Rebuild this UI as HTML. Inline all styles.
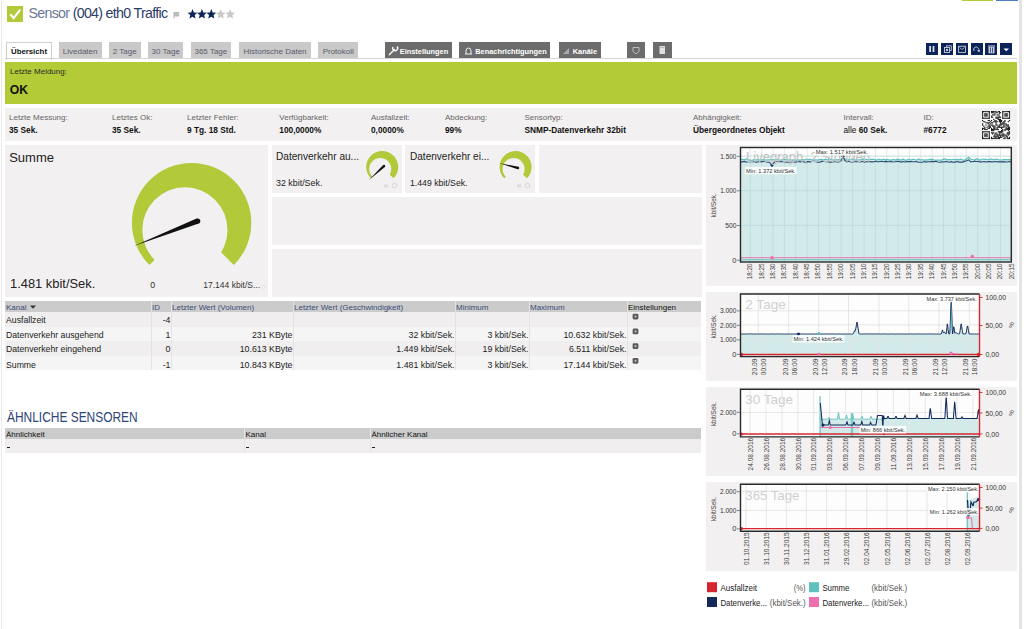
<!DOCTYPE html>
<html><head><meta charset="utf-8">
<style>
*{box-sizing:border-box;margin:0;padding:0}
html,body{width:1024px;height:629px;overflow:hidden;background:#fff;font-family:"Liberation Sans",sans-serif;color:#222}
.a{position:absolute}
.pan{position:absolute;background:#f2f0f0}
.t{position:absolute;white-space:nowrap}
.tab{position:absolute;top:42px;height:16px;background:#c9c9c9}
.btn{position:absolute;top:42px;height:16px;background:#6c6c6c}
.nb{position:absolute;top:43px;width:12px;height:12px;background:#0c2459}
svg{position:absolute;left:0;top:0}
</style></head><body>
<div class="a" style="left:0.5px;top:0;width:1.5px;height:629px;background:#e9e9e9"></div>
<div class="a" style="left:1019px;top:0;width:3px;height:629px;background:#e4e4e4"></div>
<div class="a" style="left:962px;top:0;width:31px;height:1px;background:#b4cc34"></div>
<div class="a" style="left:996px;top:0;width:22px;height:1px;background:#4a7fc1"></div>
<div class="a" style="left:7px;top:6px;width:16px;height:16px;background:#b2c93a"></div>
<svg style="left:7px;top:6px" width="16" height="16"><path d="M3.3 8.3 L6.6 12.2 L13.2 3.6" stroke="#fff" stroke-width="2.1" fill="none"/></svg>
<div class="t" style="left:28.50px;top:6.38px;font-size:14.2px;line-height:14.2px;color:#2c3d66;font-weight:400;letter-spacing:-0.68px;"><span style="color:#6a7896">Sensor</span> (004) eth0 Traffic</div>
<svg style="left:173px;top:10.5px" width="8" height="8"><path d="M1 1 V7.5 M1 1.5 H6 L5.2 3.2 L6 5 H1" stroke="#b5b5b5" stroke-width="1" fill="#bdbdbd"/></svg>
<svg style="left:0;top:0" width="300" height="30"><polygon points="192.50,9.10 193.88,12.41 197.45,12.69 194.73,15.02 195.56,18.51 192.50,16.64 189.44,18.51 190.27,15.02 187.55,12.69 191.12,12.41" fill="#0f2457"/><polygon points="201.90,9.10 203.28,12.41 206.85,12.69 204.13,15.02 204.96,18.51 201.90,16.64 198.84,18.51 199.67,15.02 196.95,12.69 200.52,12.41" fill="#0f2457"/><polygon points="211.30,9.10 212.68,12.41 216.25,12.69 213.53,15.02 214.36,18.51 211.30,16.64 208.24,18.51 209.07,15.02 206.35,12.69 209.92,12.41" fill="#0f2457"/><polygon points="220.70,9.10 222.08,12.41 225.65,12.69 222.93,15.02 223.76,18.51 220.70,16.64 217.64,18.51 218.47,15.02 215.75,12.69 219.32,12.41" fill="#c8c8c8"/><polygon points="230.10,9.10 231.48,12.41 235.05,12.69 232.33,15.02 233.16,18.51 230.10,16.64 227.04,18.51 227.87,15.02 225.15,12.69 228.72,12.41" fill="#c8c8c8"/></svg>
<div class="a" style="left:6px;top:42px;width:46px;height:18px;background:#fff;border:1px solid #cfcfcf;border-bottom:none"></div>
<div class="t" style="left:-71.00px;width:200px;text-align:center;top:48.00px;font-size:7.8px;line-height:7.8px;color:#111;font-weight:700;letter-spacing:0px;">Übersicht</div>
<div class="tab" style="left:58.6px;width:43.1px"></div>
<div class="t" style="left:-19.85px;width:200px;text-align:center;top:47.83px;font-size:8px;line-height:8px;color:#5a5a6a;font-weight:400;letter-spacing:0px;">Livedaten</div>
<div class="tab" style="left:109px;width:31.5px"></div>
<div class="t" style="left:24.75px;width:200px;text-align:center;top:47.83px;font-size:8px;line-height:8px;color:#5a5a6a;font-weight:400;letter-spacing:0px;">2 Tage</div>
<div class="tab" style="left:148px;width:35.4px"></div>
<div class="t" style="left:65.70px;width:200px;text-align:center;top:47.83px;font-size:8px;line-height:8px;color:#5a5a6a;font-weight:400;letter-spacing:0px;">30 Tage</div>
<div class="tab" style="left:191px;width:39.7px"></div>
<div class="t" style="left:110.85px;width:200px;text-align:center;top:47.83px;font-size:8px;line-height:8px;color:#5a5a6a;font-weight:400;letter-spacing:0px;">365 Tage</div>
<div class="tab" style="left:239px;width:72.0px"></div>
<div class="t" style="left:175.00px;width:200px;text-align:center;top:47.83px;font-size:8px;line-height:8px;color:#5a5a6a;font-weight:400;letter-spacing:0px;">Historische Daten</div>
<div class="tab" style="left:318px;width:40.4px"></div>
<div class="t" style="left:238.20px;width:200px;text-align:center;top:47.83px;font-size:8px;line-height:8px;color:#5a5a6a;font-weight:400;letter-spacing:0px;">Protokoll</div>
<div class="btn" style="left:385px;width:66.5px"></div>
<div class="t" style="left:399.75px;top:48.04px;font-size:7.4px;line-height:7.4px;color:#fff;font-weight:700;letter-spacing:0px;">Einstellungen</div>
<div class="btn" style="left:459px;width:91.0px"></div>
<div class="t" style="left:475.25px;top:48.04px;font-size:7.4px;line-height:7.4px;color:#fff;font-weight:700;letter-spacing:0px;">Benachrichtigungen</div>
<div class="btn" style="left:558.5px;width:42.2px"></div>
<div class="t" style="left:572.75px;top:48.04px;font-size:7.4px;line-height:7.4px;color:#fff;font-weight:700;letter-spacing:0px;">Kanäle</div>
<div class="btn" style="left:627px;width:18px"></div>
<div class="btn" style="left:653px;width:18.5px"></div>
<svg width="700" height="60"><path d="M389 55 L395 49 M393 47 a2.5 2.5 0 1 0 4 -0.5" stroke="#fff" stroke-width="1.3" fill="none"/><path d="M465 54 h7 M466 54 v-3 a2.5 3 0 0 1 5 0 v3" stroke="#fff" stroke-width="0.9" fill="none"/><path d="M563 54 L569 48 V54 Z" fill="#aaa"/><path d="M633 47.5 h6 v4 l-3 2.5 l-3 -2.5 z" fill="none" stroke="#bdbdbd" stroke-width="1"/><rect x="659.5" y="46" width="5.5" height="8" fill="#e0e0e0"/><rect x="660" y="47" width="4.5" height="0.6" fill="#999"/></svg>
<div class="nb" style="left:926px"></div>
<div class="nb" style="left:941px"></div>
<div class="nb" style="left:955.8px"></div>
<div class="nb" style="left:970.5px"></div>
<div class="nb" style="left:985.4px"></div>
<div class="nb" style="left:1000.3px"></div>
<svg width="1024" height="60"><rect x="929.2" y="46" width="1.8" height="6" fill="#d8dce6"/><rect x="932.6" y="46" width="1.8" height="6" fill="#d8dce6"/><rect x="944.5" y="47.5" width="5" height="5" fill="none" stroke="#c9ced9" stroke-width="0.9"/><path d="M946.5 47.5 V45.8 H951.3 V50.5 H949.5" fill="none" stroke="#c9ced9" stroke-width="0.9"/><circle cx="947" cy="50" r="1.2" fill="#c9ced9"/><rect x="958.6" y="46.2" width="6.8" height="6.2" fill="none" stroke="#c9ced9" stroke-width="0.9"/><path d="M959.5 47.5 L962 49.5 L964.5 47.5" fill="none" stroke="#c9ced9" stroke-width="0.8"/><path d="M974.3 51 a2.4 2.4 0 1 1 4.2 -1.6" stroke="#c9ced9" stroke-width="1" fill="none"/><path d="M977 50.5 L979.5 52.5 L980 49.5 z" fill="#c9ced9"/><rect x="988.5" y="46.8" width="6" height="6.5" fill="#c9ced9"/><rect x="988" y="45.5" width="7" height="1" fill="#c9ced9"/><rect x="990.3" y="47.5" width="0.7" height="5" fill="#0c2459"/><rect x="992" y="47.5" width="0.7" height="5" fill="#0c2459"/><path d="M1003.5 48.5 h5.5 l-2.75 2.8 z" fill="#fff"/></svg>
<div class="a" style="left:5px;top:58px;width:1012px;height:1px;background:#d6d6d6"></div>
<div class="a" style="left:5px;top:62px;width:1012px;height:42.4px;background:#b3cb37"></div>
<div class="t" style="left:10.00px;top:68.43px;font-size:8px;line-height:8px;color:#2a2a2a;font-weight:400;letter-spacing:0px;">Letzte Meldung:</div>
<div class="t" style="left:9.70px;top:83.57px;font-size:12.2px;line-height:12.2px;color:#111;font-weight:700;letter-spacing:0px;">OK</div>
<div class="pan" style="left:5px;top:108px;width:1012px;height:32.5px"></div>
<div class="t" style="left:9.00px;top:114.13px;font-size:8px;line-height:8px;color:#666;font-weight:400;letter-spacing:0px;">Letzte Messung:</div>
<div class="t" style="left:9.00px;top:125.57px;font-size:8.3px;line-height:8.3px;color:#111;font-weight:700;letter-spacing:0px;">35 Sek.</div>
<div class="t" style="left:112.00px;top:114.13px;font-size:8px;line-height:8px;color:#666;font-weight:400;letter-spacing:0px;">Letztes Ok:</div>
<div class="t" style="left:112.00px;top:125.57px;font-size:8.3px;line-height:8.3px;color:#111;font-weight:700;letter-spacing:0px;">35 Sek.</div>
<div class="t" style="left:187.00px;top:114.13px;font-size:8px;line-height:8px;color:#666;font-weight:400;letter-spacing:0px;">Letzter Fehler:</div>
<div class="t" style="left:187.00px;top:125.57px;font-size:8.3px;line-height:8.3px;color:#111;font-weight:700;letter-spacing:0px;">9 Tg. 18 Std.</div>
<div class="t" style="left:279.30px;top:114.13px;font-size:8px;line-height:8px;color:#666;font-weight:400;letter-spacing:0px;">Verfügbarkeit:</div>
<div class="t" style="left:279.30px;top:125.57px;font-size:8.3px;line-height:8.3px;color:#111;font-weight:700;letter-spacing:0px;">100,0000%</div>
<div class="t" style="left:371.00px;top:114.13px;font-size:8px;line-height:8px;color:#666;font-weight:400;letter-spacing:0px;">Ausfallzeit:</div>
<div class="t" style="left:371.00px;top:125.57px;font-size:8.3px;line-height:8.3px;color:#111;font-weight:700;letter-spacing:0px;">0,0000%</div>
<div class="t" style="left:445.00px;top:114.13px;font-size:8px;line-height:8px;color:#666;font-weight:400;letter-spacing:0px;">Abdeckung:</div>
<div class="t" style="left:445.00px;top:125.57px;font-size:8.3px;line-height:8.3px;color:#111;font-weight:700;letter-spacing:0px;">99%</div>
<div class="t" style="left:524.50px;top:114.13px;font-size:8px;line-height:8px;color:#666;font-weight:400;letter-spacing:0px;">Sensortyp:</div>
<div class="t" style="left:524.50px;top:125.57px;font-size:8.3px;line-height:8.3px;color:#111;font-weight:700;letter-spacing:0px;">SNMP-Datenverkehr 32bit</div>
<div class="t" style="left:693.00px;top:114.13px;font-size:8px;line-height:8px;color:#666;font-weight:400;letter-spacing:0px;">Abhängigkeit:</div>
<div class="t" style="left:693.00px;top:125.57px;font-size:8.3px;line-height:8.3px;color:#111;font-weight:700;letter-spacing:0px;">Übergeordnetes Objekt</div>
<div class="t" style="left:843.50px;top:114.13px;font-size:8px;line-height:8px;color:#666;font-weight:400;letter-spacing:0px;">Intervall:</div>
<div class="t" style="left:843.50px;top:125.57px;font-size:8.3px;line-height:8.3px;color:#111;font-weight:700;letter-spacing:0px;"><span style="font-weight:400">alle</span> 60 Sek.</div>
<div class="t" style="left:923.50px;top:114.13px;font-size:8px;line-height:8px;color:#666;font-weight:400;letter-spacing:0px;">ID:</div>
<div class="t" style="left:923.50px;top:125.57px;font-size:8.3px;line-height:8.3px;color:#111;font-weight:700;letter-spacing:0px;">#6772</div>
<svg width="1024" height="150"><rect x="982" y="111" width="28" height="28" fill="#fff"/><rect x="982.00" y="111.00" width="1.17" height="1.17" fill="#111"/><rect x="983.12" y="111.00" width="1.17" height="1.17" fill="#111"/><rect x="984.24" y="111.00" width="1.17" height="1.17" fill="#111"/><rect x="985.36" y="111.00" width="1.17" height="1.17" fill="#111"/><rect x="986.48" y="111.00" width="1.17" height="1.17" fill="#111"/><rect x="987.60" y="111.00" width="1.17" height="1.17" fill="#111"/><rect x="988.72" y="111.00" width="1.17" height="1.17" fill="#111"/><rect x="990.96" y="111.00" width="1.17" height="1.17" fill="#111"/><rect x="992.08" y="111.00" width="1.17" height="1.17" fill="#111"/><rect x="993.20" y="111.00" width="1.17" height="1.17" fill="#111"/><rect x="994.32" y="111.00" width="1.17" height="1.17" fill="#111"/><rect x="995.44" y="111.00" width="1.17" height="1.17" fill="#111"/><rect x="997.68" y="111.00" width="1.17" height="1.17" fill="#111"/><rect x="998.80" y="111.00" width="1.17" height="1.17" fill="#111"/><rect x="1002.16" y="111.00" width="1.17" height="1.17" fill="#111"/><rect x="1003.28" y="111.00" width="1.17" height="1.17" fill="#111"/><rect x="1004.40" y="111.00" width="1.17" height="1.17" fill="#111"/><rect x="1005.52" y="111.00" width="1.17" height="1.17" fill="#111"/><rect x="1006.64" y="111.00" width="1.17" height="1.17" fill="#111"/><rect x="1007.76" y="111.00" width="1.17" height="1.17" fill="#111"/><rect x="1008.88" y="111.00" width="1.17" height="1.17" fill="#111"/><rect x="982.00" y="112.12" width="1.17" height="1.17" fill="#111"/><rect x="988.72" y="112.12" width="1.17" height="1.17" fill="#111"/><rect x="990.96" y="112.12" width="1.17" height="1.17" fill="#111"/><rect x="992.08" y="112.12" width="1.17" height="1.17" fill="#111"/><rect x="993.20" y="112.12" width="1.17" height="1.17" fill="#111"/><rect x="995.44" y="112.12" width="1.17" height="1.17" fill="#111"/><rect x="996.56" y="112.12" width="1.17" height="1.17" fill="#111"/><rect x="998.80" y="112.12" width="1.17" height="1.17" fill="#111"/><rect x="999.92" y="112.12" width="1.17" height="1.17" fill="#111"/><rect x="1002.16" y="112.12" width="1.17" height="1.17" fill="#111"/><rect x="1008.88" y="112.12" width="1.17" height="1.17" fill="#111"/><rect x="982.00" y="113.24" width="1.17" height="1.17" fill="#111"/><rect x="984.24" y="113.24" width="1.17" height="1.17" fill="#111"/><rect x="985.36" y="113.24" width="1.17" height="1.17" fill="#111"/><rect x="986.48" y="113.24" width="1.17" height="1.17" fill="#111"/><rect x="988.72" y="113.24" width="1.17" height="1.17" fill="#111"/><rect x="994.32" y="113.24" width="1.17" height="1.17" fill="#111"/><rect x="998.80" y="113.24" width="1.17" height="1.17" fill="#111"/><rect x="1002.16" y="113.24" width="1.17" height="1.17" fill="#111"/><rect x="1004.40" y="113.24" width="1.17" height="1.17" fill="#111"/><rect x="1005.52" y="113.24" width="1.17" height="1.17" fill="#111"/><rect x="1006.64" y="113.24" width="1.17" height="1.17" fill="#111"/><rect x="1008.88" y="113.24" width="1.17" height="1.17" fill="#111"/><rect x="982.00" y="114.36" width="1.17" height="1.17" fill="#111"/><rect x="984.24" y="114.36" width="1.17" height="1.17" fill="#111"/><rect x="985.36" y="114.36" width="1.17" height="1.17" fill="#111"/><rect x="986.48" y="114.36" width="1.17" height="1.17" fill="#111"/><rect x="988.72" y="114.36" width="1.17" height="1.17" fill="#111"/><rect x="992.08" y="114.36" width="1.17" height="1.17" fill="#111"/><rect x="993.20" y="114.36" width="1.17" height="1.17" fill="#111"/><rect x="994.32" y="114.36" width="1.17" height="1.17" fill="#111"/><rect x="996.56" y="114.36" width="1.17" height="1.17" fill="#111"/><rect x="997.68" y="114.36" width="1.17" height="1.17" fill="#111"/><rect x="1002.16" y="114.36" width="1.17" height="1.17" fill="#111"/><rect x="1004.40" y="114.36" width="1.17" height="1.17" fill="#111"/><rect x="1005.52" y="114.36" width="1.17" height="1.17" fill="#111"/><rect x="1006.64" y="114.36" width="1.17" height="1.17" fill="#111"/><rect x="1008.88" y="114.36" width="1.17" height="1.17" fill="#111"/><rect x="982.00" y="115.48" width="1.17" height="1.17" fill="#111"/><rect x="984.24" y="115.48" width="1.17" height="1.17" fill="#111"/><rect x="985.36" y="115.48" width="1.17" height="1.17" fill="#111"/><rect x="986.48" y="115.48" width="1.17" height="1.17" fill="#111"/><rect x="988.72" y="115.48" width="1.17" height="1.17" fill="#111"/><rect x="990.96" y="115.48" width="1.17" height="1.17" fill="#111"/><rect x="998.80" y="115.48" width="1.17" height="1.17" fill="#111"/><rect x="1002.16" y="115.48" width="1.17" height="1.17" fill="#111"/><rect x="1004.40" y="115.48" width="1.17" height="1.17" fill="#111"/><rect x="1005.52" y="115.48" width="1.17" height="1.17" fill="#111"/><rect x="1006.64" y="115.48" width="1.17" height="1.17" fill="#111"/><rect x="1008.88" y="115.48" width="1.17" height="1.17" fill="#111"/><rect x="982.00" y="116.60" width="1.17" height="1.17" fill="#111"/><rect x="988.72" y="116.60" width="1.17" height="1.17" fill="#111"/><rect x="990.96" y="116.60" width="1.17" height="1.17" fill="#111"/><rect x="992.08" y="116.60" width="1.17" height="1.17" fill="#111"/><rect x="995.44" y="116.60" width="1.17" height="1.17" fill="#111"/><rect x="996.56" y="116.60" width="1.17" height="1.17" fill="#111"/><rect x="997.68" y="116.60" width="1.17" height="1.17" fill="#111"/><rect x="998.80" y="116.60" width="1.17" height="1.17" fill="#111"/><rect x="999.92" y="116.60" width="1.17" height="1.17" fill="#111"/><rect x="1002.16" y="116.60" width="1.17" height="1.17" fill="#111"/><rect x="1008.88" y="116.60" width="1.17" height="1.17" fill="#111"/><rect x="982.00" y="117.72" width="1.17" height="1.17" fill="#111"/><rect x="983.12" y="117.72" width="1.17" height="1.17" fill="#111"/><rect x="984.24" y="117.72" width="1.17" height="1.17" fill="#111"/><rect x="985.36" y="117.72" width="1.17" height="1.17" fill="#111"/><rect x="986.48" y="117.72" width="1.17" height="1.17" fill="#111"/><rect x="987.60" y="117.72" width="1.17" height="1.17" fill="#111"/><rect x="988.72" y="117.72" width="1.17" height="1.17" fill="#111"/><rect x="995.44" y="117.72" width="1.17" height="1.17" fill="#111"/><rect x="996.56" y="117.72" width="1.17" height="1.17" fill="#111"/><rect x="997.68" y="117.72" width="1.17" height="1.17" fill="#111"/><rect x="1002.16" y="117.72" width="1.17" height="1.17" fill="#111"/><rect x="1003.28" y="117.72" width="1.17" height="1.17" fill="#111"/><rect x="1004.40" y="117.72" width="1.17" height="1.17" fill="#111"/><rect x="1005.52" y="117.72" width="1.17" height="1.17" fill="#111"/><rect x="1006.64" y="117.72" width="1.17" height="1.17" fill="#111"/><rect x="1007.76" y="117.72" width="1.17" height="1.17" fill="#111"/><rect x="1008.88" y="117.72" width="1.17" height="1.17" fill="#111"/><rect x="993.20" y="118.84" width="1.17" height="1.17" fill="#111"/><rect x="997.68" y="118.84" width="1.17" height="1.17" fill="#111"/><rect x="998.80" y="118.84" width="1.17" height="1.17" fill="#111"/><rect x="999.92" y="118.84" width="1.17" height="1.17" fill="#111"/><rect x="982.00" y="119.96" width="1.17" height="1.17" fill="#111"/><rect x="987.60" y="119.96" width="1.17" height="1.17" fill="#111"/><rect x="988.72" y="119.96" width="1.17" height="1.17" fill="#111"/><rect x="990.96" y="119.96" width="1.17" height="1.17" fill="#111"/><rect x="994.32" y="119.96" width="1.17" height="1.17" fill="#111"/><rect x="995.44" y="119.96" width="1.17" height="1.17" fill="#111"/><rect x="998.80" y="119.96" width="1.17" height="1.17" fill="#111"/><rect x="999.92" y="119.96" width="1.17" height="1.17" fill="#111"/><rect x="1001.04" y="119.96" width="1.17" height="1.17" fill="#111"/><rect x="1004.40" y="119.96" width="1.17" height="1.17" fill="#111"/><rect x="1008.88" y="119.96" width="1.17" height="1.17" fill="#111"/><rect x="983.12" y="121.08" width="1.17" height="1.17" fill="#111"/><rect x="984.24" y="121.08" width="1.17" height="1.17" fill="#111"/><rect x="989.84" y="121.08" width="1.17" height="1.17" fill="#111"/><rect x="993.20" y="121.08" width="1.17" height="1.17" fill="#111"/><rect x="994.32" y="121.08" width="1.17" height="1.17" fill="#111"/><rect x="995.44" y="121.08" width="1.17" height="1.17" fill="#111"/><rect x="996.56" y="121.08" width="1.17" height="1.17" fill="#111"/><rect x="998.80" y="121.08" width="1.17" height="1.17" fill="#111"/><rect x="999.92" y="121.08" width="1.17" height="1.17" fill="#111"/><rect x="1001.04" y="121.08" width="1.17" height="1.17" fill="#111"/><rect x="1003.28" y="121.08" width="1.17" height="1.17" fill="#111"/><rect x="1004.40" y="121.08" width="1.17" height="1.17" fill="#111"/><rect x="1007.76" y="121.08" width="1.17" height="1.17" fill="#111"/><rect x="985.36" y="122.20" width="1.17" height="1.17" fill="#111"/><rect x="986.48" y="122.20" width="1.17" height="1.17" fill="#111"/><rect x="987.60" y="122.20" width="1.17" height="1.17" fill="#111"/><rect x="988.72" y="122.20" width="1.17" height="1.17" fill="#111"/><rect x="990.96" y="122.20" width="1.17" height="1.17" fill="#111"/><rect x="992.08" y="122.20" width="1.17" height="1.17" fill="#111"/><rect x="995.44" y="122.20" width="1.17" height="1.17" fill="#111"/><rect x="999.92" y="122.20" width="1.17" height="1.17" fill="#111"/><rect x="1002.16" y="122.20" width="1.17" height="1.17" fill="#111"/><rect x="1003.28" y="122.20" width="1.17" height="1.17" fill="#111"/><rect x="982.00" y="123.32" width="1.17" height="1.17" fill="#111"/><rect x="987.60" y="123.32" width="1.17" height="1.17" fill="#111"/><rect x="989.84" y="123.32" width="1.17" height="1.17" fill="#111"/><rect x="995.44" y="123.32" width="1.17" height="1.17" fill="#111"/><rect x="999.92" y="123.32" width="1.17" height="1.17" fill="#111"/><rect x="1001.04" y="123.32" width="1.17" height="1.17" fill="#111"/><rect x="1002.16" y="123.32" width="1.17" height="1.17" fill="#111"/><rect x="1003.28" y="123.32" width="1.17" height="1.17" fill="#111"/><rect x="1004.40" y="123.32" width="1.17" height="1.17" fill="#111"/><rect x="1005.52" y="123.32" width="1.17" height="1.17" fill="#111"/><rect x="982.00" y="124.44" width="1.17" height="1.17" fill="#111"/><rect x="985.36" y="124.44" width="1.17" height="1.17" fill="#111"/><rect x="988.72" y="124.44" width="1.17" height="1.17" fill="#111"/><rect x="990.96" y="124.44" width="1.17" height="1.17" fill="#111"/><rect x="992.08" y="124.44" width="1.17" height="1.17" fill="#111"/><rect x="995.44" y="124.44" width="1.17" height="1.17" fill="#111"/><rect x="996.56" y="124.44" width="1.17" height="1.17" fill="#111"/><rect x="998.80" y="124.44" width="1.17" height="1.17" fill="#111"/><rect x="999.92" y="124.44" width="1.17" height="1.17" fill="#111"/><rect x="1001.04" y="124.44" width="1.17" height="1.17" fill="#111"/><rect x="1003.28" y="124.44" width="1.17" height="1.17" fill="#111"/><rect x="1005.52" y="124.44" width="1.17" height="1.17" fill="#111"/><rect x="1006.64" y="124.44" width="1.17" height="1.17" fill="#111"/><rect x="1007.76" y="124.44" width="1.17" height="1.17" fill="#111"/><rect x="983.12" y="125.56" width="1.17" height="1.17" fill="#111"/><rect x="987.60" y="125.56" width="1.17" height="1.17" fill="#111"/><rect x="988.72" y="125.56" width="1.17" height="1.17" fill="#111"/><rect x="989.84" y="125.56" width="1.17" height="1.17" fill="#111"/><rect x="992.08" y="125.56" width="1.17" height="1.17" fill="#111"/><rect x="993.20" y="125.56" width="1.17" height="1.17" fill="#111"/><rect x="994.32" y="125.56" width="1.17" height="1.17" fill="#111"/><rect x="997.68" y="125.56" width="1.17" height="1.17" fill="#111"/><rect x="998.80" y="125.56" width="1.17" height="1.17" fill="#111"/><rect x="1003.28" y="125.56" width="1.17" height="1.17" fill="#111"/><rect x="1004.40" y="125.56" width="1.17" height="1.17" fill="#111"/><rect x="1006.64" y="125.56" width="1.17" height="1.17" fill="#111"/><rect x="1007.76" y="125.56" width="1.17" height="1.17" fill="#111"/><rect x="984.24" y="126.68" width="1.17" height="1.17" fill="#111"/><rect x="986.48" y="126.68" width="1.17" height="1.17" fill="#111"/><rect x="988.72" y="126.68" width="1.17" height="1.17" fill="#111"/><rect x="989.84" y="126.68" width="1.17" height="1.17" fill="#111"/><rect x="993.20" y="126.68" width="1.17" height="1.17" fill="#111"/><rect x="994.32" y="126.68" width="1.17" height="1.17" fill="#111"/><rect x="996.56" y="126.68" width="1.17" height="1.17" fill="#111"/><rect x="997.68" y="126.68" width="1.17" height="1.17" fill="#111"/><rect x="998.80" y="126.68" width="1.17" height="1.17" fill="#111"/><rect x="999.92" y="126.68" width="1.17" height="1.17" fill="#111"/><rect x="1001.04" y="126.68" width="1.17" height="1.17" fill="#111"/><rect x="1002.16" y="126.68" width="1.17" height="1.17" fill="#111"/><rect x="1003.28" y="126.68" width="1.17" height="1.17" fill="#111"/><rect x="1005.52" y="126.68" width="1.17" height="1.17" fill="#111"/><rect x="1007.76" y="126.68" width="1.17" height="1.17" fill="#111"/><rect x="1008.88" y="126.68" width="1.17" height="1.17" fill="#111"/><rect x="982.00" y="127.80" width="1.17" height="1.17" fill="#111"/><rect x="983.12" y="127.80" width="1.17" height="1.17" fill="#111"/><rect x="984.24" y="127.80" width="1.17" height="1.17" fill="#111"/><rect x="987.60" y="127.80" width="1.17" height="1.17" fill="#111"/><rect x="988.72" y="127.80" width="1.17" height="1.17" fill="#111"/><rect x="990.96" y="127.80" width="1.17" height="1.17" fill="#111"/><rect x="993.20" y="127.80" width="1.17" height="1.17" fill="#111"/><rect x="994.32" y="127.80" width="1.17" height="1.17" fill="#111"/><rect x="996.56" y="127.80" width="1.17" height="1.17" fill="#111"/><rect x="1001.04" y="127.80" width="1.17" height="1.17" fill="#111"/><rect x="1005.52" y="127.80" width="1.17" height="1.17" fill="#111"/><rect x="1006.64" y="127.80" width="1.17" height="1.17" fill="#111"/><rect x="1007.76" y="127.80" width="1.17" height="1.17" fill="#111"/><rect x="1008.88" y="127.80" width="1.17" height="1.17" fill="#111"/><rect x="982.00" y="128.92" width="1.17" height="1.17" fill="#111"/><rect x="984.24" y="128.92" width="1.17" height="1.17" fill="#111"/><rect x="985.36" y="128.92" width="1.17" height="1.17" fill="#111"/><rect x="986.48" y="128.92" width="1.17" height="1.17" fill="#111"/><rect x="990.96" y="128.92" width="1.17" height="1.17" fill="#111"/><rect x="992.08" y="128.92" width="1.17" height="1.17" fill="#111"/><rect x="993.20" y="128.92" width="1.17" height="1.17" fill="#111"/><rect x="994.32" y="128.92" width="1.17" height="1.17" fill="#111"/><rect x="995.44" y="128.92" width="1.17" height="1.17" fill="#111"/><rect x="996.56" y="128.92" width="1.17" height="1.17" fill="#111"/><rect x="997.68" y="128.92" width="1.17" height="1.17" fill="#111"/><rect x="1002.16" y="128.92" width="1.17" height="1.17" fill="#111"/><rect x="1004.40" y="128.92" width="1.17" height="1.17" fill="#111"/><rect x="1005.52" y="128.92" width="1.17" height="1.17" fill="#111"/><rect x="1006.64" y="128.92" width="1.17" height="1.17" fill="#111"/><rect x="1007.76" y="128.92" width="1.17" height="1.17" fill="#111"/><rect x="1008.88" y="128.92" width="1.17" height="1.17" fill="#111"/><rect x="990.96" y="130.04" width="1.17" height="1.17" fill="#111"/><rect x="992.08" y="130.04" width="1.17" height="1.17" fill="#111"/><rect x="993.20" y="130.04" width="1.17" height="1.17" fill="#111"/><rect x="1001.04" y="130.04" width="1.17" height="1.17" fill="#111"/><rect x="1002.16" y="130.04" width="1.17" height="1.17" fill="#111"/><rect x="1004.40" y="130.04" width="1.17" height="1.17" fill="#111"/><rect x="1007.76" y="130.04" width="1.17" height="1.17" fill="#111"/><rect x="982.00" y="131.16" width="1.17" height="1.17" fill="#111"/><rect x="983.12" y="131.16" width="1.17" height="1.17" fill="#111"/><rect x="984.24" y="131.16" width="1.17" height="1.17" fill="#111"/><rect x="985.36" y="131.16" width="1.17" height="1.17" fill="#111"/><rect x="986.48" y="131.16" width="1.17" height="1.17" fill="#111"/><rect x="987.60" y="131.16" width="1.17" height="1.17" fill="#111"/><rect x="988.72" y="131.16" width="1.17" height="1.17" fill="#111"/><rect x="997.68" y="131.16" width="1.17" height="1.17" fill="#111"/><rect x="998.80" y="131.16" width="1.17" height="1.17" fill="#111"/><rect x="999.92" y="131.16" width="1.17" height="1.17" fill="#111"/><rect x="1001.04" y="131.16" width="1.17" height="1.17" fill="#111"/><rect x="1002.16" y="131.16" width="1.17" height="1.17" fill="#111"/><rect x="1008.88" y="131.16" width="1.17" height="1.17" fill="#111"/><rect x="982.00" y="132.28" width="1.17" height="1.17" fill="#111"/><rect x="988.72" y="132.28" width="1.17" height="1.17" fill="#111"/><rect x="990.96" y="132.28" width="1.17" height="1.17" fill="#111"/><rect x="992.08" y="132.28" width="1.17" height="1.17" fill="#111"/><rect x="993.20" y="132.28" width="1.17" height="1.17" fill="#111"/><rect x="995.44" y="132.28" width="1.17" height="1.17" fill="#111"/><rect x="998.80" y="132.28" width="1.17" height="1.17" fill="#111"/><rect x="999.92" y="132.28" width="1.17" height="1.17" fill="#111"/><rect x="1001.04" y="132.28" width="1.17" height="1.17" fill="#111"/><rect x="1006.64" y="132.28" width="1.17" height="1.17" fill="#111"/><rect x="1007.76" y="132.28" width="1.17" height="1.17" fill="#111"/><rect x="1008.88" y="132.28" width="1.17" height="1.17" fill="#111"/><rect x="982.00" y="133.40" width="1.17" height="1.17" fill="#111"/><rect x="984.24" y="133.40" width="1.17" height="1.17" fill="#111"/><rect x="985.36" y="133.40" width="1.17" height="1.17" fill="#111"/><rect x="986.48" y="133.40" width="1.17" height="1.17" fill="#111"/><rect x="988.72" y="133.40" width="1.17" height="1.17" fill="#111"/><rect x="992.08" y="133.40" width="1.17" height="1.17" fill="#111"/><rect x="994.32" y="133.40" width="1.17" height="1.17" fill="#111"/><rect x="995.44" y="133.40" width="1.17" height="1.17" fill="#111"/><rect x="996.56" y="133.40" width="1.17" height="1.17" fill="#111"/><rect x="998.80" y="133.40" width="1.17" height="1.17" fill="#111"/><rect x="1002.16" y="133.40" width="1.17" height="1.17" fill="#111"/><rect x="1003.28" y="133.40" width="1.17" height="1.17" fill="#111"/><rect x="1006.64" y="133.40" width="1.17" height="1.17" fill="#111"/><rect x="1007.76" y="133.40" width="1.17" height="1.17" fill="#111"/><rect x="1008.88" y="133.40" width="1.17" height="1.17" fill="#111"/><rect x="982.00" y="134.52" width="1.17" height="1.17" fill="#111"/><rect x="984.24" y="134.52" width="1.17" height="1.17" fill="#111"/><rect x="985.36" y="134.52" width="1.17" height="1.17" fill="#111"/><rect x="986.48" y="134.52" width="1.17" height="1.17" fill="#111"/><rect x="988.72" y="134.52" width="1.17" height="1.17" fill="#111"/><rect x="994.32" y="134.52" width="1.17" height="1.17" fill="#111"/><rect x="996.56" y="134.52" width="1.17" height="1.17" fill="#111"/><rect x="997.68" y="134.52" width="1.17" height="1.17" fill="#111"/><rect x="998.80" y="134.52" width="1.17" height="1.17" fill="#111"/><rect x="999.92" y="134.52" width="1.17" height="1.17" fill="#111"/><rect x="1001.04" y="134.52" width="1.17" height="1.17" fill="#111"/><rect x="1002.16" y="134.52" width="1.17" height="1.17" fill="#111"/><rect x="1003.28" y="134.52" width="1.17" height="1.17" fill="#111"/><rect x="1004.40" y="134.52" width="1.17" height="1.17" fill="#111"/><rect x="1005.52" y="134.52" width="1.17" height="1.17" fill="#111"/><rect x="1007.76" y="134.52" width="1.17" height="1.17" fill="#111"/><rect x="982.00" y="135.64" width="1.17" height="1.17" fill="#111"/><rect x="984.24" y="135.64" width="1.17" height="1.17" fill="#111"/><rect x="985.36" y="135.64" width="1.17" height="1.17" fill="#111"/><rect x="986.48" y="135.64" width="1.17" height="1.17" fill="#111"/><rect x="988.72" y="135.64" width="1.17" height="1.17" fill="#111"/><rect x="993.20" y="135.64" width="1.17" height="1.17" fill="#111"/><rect x="994.32" y="135.64" width="1.17" height="1.17" fill="#111"/><rect x="995.44" y="135.64" width="1.17" height="1.17" fill="#111"/><rect x="996.56" y="135.64" width="1.17" height="1.17" fill="#111"/><rect x="997.68" y="135.64" width="1.17" height="1.17" fill="#111"/><rect x="999.92" y="135.64" width="1.17" height="1.17" fill="#111"/><rect x="1002.16" y="135.64" width="1.17" height="1.17" fill="#111"/><rect x="1003.28" y="135.64" width="1.17" height="1.17" fill="#111"/><rect x="1005.52" y="135.64" width="1.17" height="1.17" fill="#111"/><rect x="1006.64" y="135.64" width="1.17" height="1.17" fill="#111"/><rect x="982.00" y="136.76" width="1.17" height="1.17" fill="#111"/><rect x="988.72" y="136.76" width="1.17" height="1.17" fill="#111"/><rect x="990.96" y="136.76" width="1.17" height="1.17" fill="#111"/><rect x="994.32" y="136.76" width="1.17" height="1.17" fill="#111"/><rect x="995.44" y="136.76" width="1.17" height="1.17" fill="#111"/><rect x="997.68" y="136.76" width="1.17" height="1.17" fill="#111"/><rect x="998.80" y="136.76" width="1.17" height="1.17" fill="#111"/><rect x="999.92" y="136.76" width="1.17" height="1.17" fill="#111"/><rect x="1001.04" y="136.76" width="1.17" height="1.17" fill="#111"/><rect x="1004.40" y="136.76" width="1.17" height="1.17" fill="#111"/><rect x="1006.64" y="136.76" width="1.17" height="1.17" fill="#111"/><rect x="1008.88" y="136.76" width="1.17" height="1.17" fill="#111"/><rect x="982.00" y="137.88" width="1.17" height="1.17" fill="#111"/><rect x="983.12" y="137.88" width="1.17" height="1.17" fill="#111"/><rect x="984.24" y="137.88" width="1.17" height="1.17" fill="#111"/><rect x="985.36" y="137.88" width="1.17" height="1.17" fill="#111"/><rect x="986.48" y="137.88" width="1.17" height="1.17" fill="#111"/><rect x="987.60" y="137.88" width="1.17" height="1.17" fill="#111"/><rect x="988.72" y="137.88" width="1.17" height="1.17" fill="#111"/><rect x="990.96" y="137.88" width="1.17" height="1.17" fill="#111"/><rect x="992.08" y="137.88" width="1.17" height="1.17" fill="#111"/><rect x="993.20" y="137.88" width="1.17" height="1.17" fill="#111"/><rect x="994.32" y="137.88" width="1.17" height="1.17" fill="#111"/><rect x="995.44" y="137.88" width="1.17" height="1.17" fill="#111"/><rect x="996.56" y="137.88" width="1.17" height="1.17" fill="#111"/><rect x="997.68" y="137.88" width="1.17" height="1.17" fill="#111"/><rect x="998.80" y="137.88" width="1.17" height="1.17" fill="#111"/><rect x="1003.28" y="137.88" width="1.17" height="1.17" fill="#111"/><rect x="1004.40" y="137.88" width="1.17" height="1.17" fill="#111"/><rect x="1006.64" y="137.88" width="1.17" height="1.17" fill="#111"/><rect x="1007.76" y="137.88" width="1.17" height="1.17" fill="#111"/><rect x="1008.88" y="137.88" width="1.17" height="1.17" fill="#111"/></svg>
<div class="pan" style="left:5px;top:145px;width:263px;height:152px"></div>
<div class="pan" style="left:272px;top:145px;width:129.8px;height:47.6px"></div>
<div class="pan" style="left:405px;top:145px;width:129.6px;height:47.6px"></div>
<div class="pan" style="left:539px;top:145px;width:163px;height:47.6px"></div>
<div class="pan" style="left:272px;top:197px;width:430px;height:48px"></div>
<div class="pan" style="left:272px;top:249px;width:430px;height:48px"></div>
<div class="t" style="left:9.20px;top:151.30px;font-size:13px;line-height:13px;color:#222;font-weight:400;letter-spacing:0px;">Summe</div>
<div class="t" style="left:10.00px;top:277.83px;font-size:12.9px;line-height:12.9px;color:#222;font-weight:400;letter-spacing:0px;">1.481 kbit/Sek.</div>
<div class="t" style="left:52.60px;width:200px;text-align:center;top:280.85px;font-size:8.8px;line-height:8.8px;color:#333;font-weight:400;letter-spacing:0px;">0</div>
<div class="t" style="left:203.30px;top:281.10px;font-size:8.5px;line-height:8.5px;color:#333;font-weight:400;letter-spacing:0px;">17.144 kbit/S...</div>
<div class="t" style="left:276.00px;top:151.85px;font-size:10.1px;line-height:10.1px;color:#222;font-weight:400;letter-spacing:0px;">Datenverkehr au...</div>
<div class="t" style="left:276.00px;top:178.57px;font-size:8.9px;line-height:8.9px;color:#222;font-weight:400;letter-spacing:0px;">32 kbit/Sek.</div>
<div class="t" style="left:410.00px;top:151.89px;font-size:10.05px;line-height:10.05px;color:#222;font-weight:400;letter-spacing:0px;">Datenverkehr ei...</div>
<div class="t" style="left:410.00px;top:178.74px;font-size:8.7px;line-height:8.7px;color:#222;font-weight:400;letter-spacing:0px;">1.449 kbit/Sek.</div>
<svg width="1024" height="300"><clipPath id="g191222"><path d="M191.6 222.8 L72.19999999999999 342.20000000000005 L72.19999999999999 103.4 L311.0 103.4 L311.0 342.20000000000005 Z"/></clipPath><path clip-path="url(#g191222)" fill-rule="evenodd" fill="#b2c93a" d="M131.89999999999998 222.8 a59.7 59.7 0 1 0 119.4 0 a59.7 59.7 0 1 0 -119.4 0 Z M142.3 229.9 a42.6 42.6 0 1 0 85.2 0 a42.6 42.6 0 1 0 -85.2 0 Z"/><path d="M196.62 218.58 L133.80 246.00 L198.58 223.62 Z" fill="#111"/><circle cx="197.6" cy="221.1" r="2.7" fill="#111"/><clipPath id="g382167"><path d="M382.2 167 L350.2 199 L350.2 135 L414.2 135 L414.2 199 Z"/></clipPath><path clip-path="url(#g382167)" fill-rule="evenodd" fill="#b2c93a" d="M366.2 167 a16 16 0 1 0 32 0 a16 16 0 1 0 -32 0 Z M369.2 169 a11 11 0 1 0 22 0 a11 11 0 1 0 -22 0 Z"/><path d="M383.18 165.12 L369.00 180.00 L384.82 166.88 Z" fill="#111"/><circle cx="384" cy="166" r="1.2" fill="#111"/><clipPath id="g515167"><path d="M515.6 167 L483.6 199 L483.6 135 L547.6 135 L547.6 199 Z"/></clipPath><path clip-path="url(#g515167)" fill-rule="evenodd" fill="#b2c93a" d="M499.6 167 a16 16 0 1 0 32 0 a16 16 0 1 0 -32 0 Z M502.6 169 a11 11 0 1 0 22 0 a11 11 0 1 0 -22 0 Z"/><path d="M518.31 166.84 L499.00 163.00 L517.69 169.16 Z" fill="#111"/><circle cx="518" cy="168" r="1.2" fill="#111"/><rect x="384" y="184.5" width="4" height="3" fill="#dcdcdc"/><circle cx="394.5" cy="185.5" r="2.2" fill="none" stroke="#dcdcdc" stroke-width="1.2"/><rect x="517" y="184.5" width="4" height="3" fill="#dcdcdc"/><circle cx="527.5" cy="185.5" r="2.2" fill="none" stroke="#dcdcdc" stroke-width="1.2"/><circle cx="263.5" cy="287" r="1.6" fill="none" stroke="#e2e2e2" stroke-width="0.9"/></svg>
<div class="a" style="left:5px;top:301px;width:696px;height:11px;background:#cbcbcb"></div>
<div class="a" style="left:5px;top:312px;width:696px;height:14.6px;background:#f0eeee"></div>
<div class="a" style="left:5px;top:326.6px;width:696px;height:14.6px;background:#f6f5f5"></div>
<div class="a" style="left:5px;top:341.2px;width:696px;height:14.6px;background:#f0eeee"></div>
<div class="a" style="left:5px;top:355.8px;width:696px;height:14.6px;background:#f6f5f5"></div>
<div class="a" style="left:151px;top:301px;width:1px;height:69.4px;background:#e4e2e2"></div>
<div class="a" style="left:171px;top:301px;width:1px;height:69.4px;background:#e4e2e2"></div>
<div class="a" style="left:293px;top:301px;width:1px;height:69.4px;background:#e4e2e2"></div>
<div class="a" style="left:455px;top:301px;width:1px;height:69.4px;background:#e4e2e2"></div>
<div class="a" style="left:529px;top:301px;width:1px;height:69.4px;background:#e4e2e2"></div>
<div class="a" style="left:627px;top:301px;width:1px;height:69.4px;background:#e4e2e2"></div>
<div class="t" style="left:6.00px;top:304.03px;font-size:8px;line-height:8px;color:#3a4d78;font-weight:400;letter-spacing:0px;">Kanal</div>
<div class="t" style="left:152.00px;top:304.03px;font-size:8px;line-height:8px;color:#3a4d78;font-weight:400;letter-spacing:0px;">ID</div>
<div class="t" style="left:172.00px;top:304.03px;font-size:8px;line-height:8px;color:#3a4d78;font-weight:400;letter-spacing:0px;">Letzter Wert (Volumen)</div>
<div class="t" style="left:294.00px;top:304.03px;font-size:8px;line-height:8px;color:#3a4d78;font-weight:400;letter-spacing:0px;">Letzter Wert (Geschwindigkeit)</div>
<div class="t" style="left:456.00px;top:304.03px;font-size:8px;line-height:8px;color:#3a4d78;font-weight:400;letter-spacing:0px;">Minimum</div>
<div class="t" style="left:530.00px;top:304.03px;font-size:8px;line-height:8px;color:#3a4d78;font-weight:400;letter-spacing:0px;">Maximum</div>
<div class="t" style="left:628.00px;top:304.03px;font-size:8px;line-height:8px;color:#111;font-weight:400;letter-spacing:0px;">Einstellungen</div>
<svg width="100" height="320"><path d="M30 305.5 h6 l-3 3.2 z" fill="#333"/></svg>
<div class="t" style="left:6.00px;top:315.94px;font-size:8.7px;line-height:8.7px;color:#222;font-weight:400;letter-spacing:0px;">Ausfallzeit</div>
<div class="t" style="right:853.50px;top:315.85px;font-size:8.8px;line-height:8.8px;color:#222;font-weight:400;letter-spacing:0px;">-4</div>
<div class="t" style="left:6.00px;top:330.64px;font-size:8.7px;line-height:8.7px;color:#222;font-weight:400;letter-spacing:0px;">Datenverkehr ausgehend</div>
<div class="t" style="right:853.50px;top:330.55px;font-size:8.8px;line-height:8.8px;color:#222;font-weight:400;letter-spacing:0px;">1</div>
<div class="t" style="right:731.50px;top:330.55px;font-size:8.8px;line-height:8.8px;color:#222;font-weight:400;letter-spacing:0px;">231 KByte</div>
<div class="t" style="right:569.50px;top:330.55px;font-size:8.8px;line-height:8.8px;color:#222;font-weight:400;letter-spacing:0px;">32 kbit/Sek.</div>
<div class="t" style="right:495.50px;top:330.55px;font-size:8.8px;line-height:8.8px;color:#222;font-weight:400;letter-spacing:0px;">3 kbit/Sek.</div>
<div class="t" style="right:397.50px;top:330.55px;font-size:8.8px;line-height:8.8px;color:#222;font-weight:400;letter-spacing:0px;">10.632 kbit/Sek.</div>
<div class="t" style="left:6.00px;top:345.34px;font-size:8.7px;line-height:8.7px;color:#222;font-weight:400;letter-spacing:0px;">Datenverkehr eingehend</div>
<div class="t" style="right:853.50px;top:345.25px;font-size:8.8px;line-height:8.8px;color:#222;font-weight:400;letter-spacing:0px;">0</div>
<div class="t" style="right:731.50px;top:345.25px;font-size:8.8px;line-height:8.8px;color:#222;font-weight:400;letter-spacing:0px;">10.613 KByte</div>
<div class="t" style="right:569.50px;top:345.25px;font-size:8.8px;line-height:8.8px;color:#222;font-weight:400;letter-spacing:0px;">1.449 kbit/Sek.</div>
<div class="t" style="right:495.50px;top:345.25px;font-size:8.8px;line-height:8.8px;color:#222;font-weight:400;letter-spacing:0px;">19 kbit/Sek.</div>
<div class="t" style="right:397.50px;top:345.25px;font-size:8.8px;line-height:8.8px;color:#222;font-weight:400;letter-spacing:0px;">6.511 kbit/Sek.</div>
<div class="t" style="left:6.00px;top:360.64px;font-size:8.7px;line-height:8.7px;color:#222;font-weight:400;letter-spacing:0px;">Summe</div>
<div class="t" style="right:853.50px;top:360.55px;font-size:8.8px;line-height:8.8px;color:#222;font-weight:400;letter-spacing:0px;">-1</div>
<div class="t" style="right:731.50px;top:360.55px;font-size:8.8px;line-height:8.8px;color:#222;font-weight:400;letter-spacing:0px;">10.843 KByte</div>
<div class="t" style="right:569.50px;top:360.55px;font-size:8.8px;line-height:8.8px;color:#222;font-weight:400;letter-spacing:0px;">1.481 kbit/Sek.</div>
<div class="t" style="right:495.50px;top:360.55px;font-size:8.8px;line-height:8.8px;color:#222;font-weight:400;letter-spacing:0px;">3 kbit/Sek.</div>
<div class="t" style="right:397.50px;top:360.55px;font-size:8.8px;line-height:8.8px;color:#222;font-weight:400;letter-spacing:0px;">17.144 kbit/Sek.</div>
<svg width="700" height="380"><rect x="632.6" y="313.7" width="5.8" height="5.8" rx="1.4" fill="#5a5a5a"/><circle cx="635.5" cy="316.6" r="1.1" fill="#bbb"/><rect x="632.6" y="328.5" width="5.8" height="5.8" rx="1.4" fill="#5a5a5a"/><circle cx="635.5" cy="331.4" r="1.1" fill="#bbb"/><rect x="632.6" y="343.3" width="5.8" height="5.8" rx="1.4" fill="#5a5a5a"/><circle cx="635.5" cy="346.2" r="1.1" fill="#bbb"/><rect x="632.6" y="357.9" width="5.8" height="5.8" rx="1.4" fill="#5a5a5a"/><circle cx="635.5" cy="360.8" r="1.1" fill="#bbb"/></svg>
<div class="t" style="left:7.30px;top:409.60px;font-size:14.3px;line-height:14.3px;color:#2e4577;font-weight:400;letter-spacing:0px;transform:scaleX(0.835);transform-origin:0 0">ÄHNLICHE SENSOREN</div>
<div class="a" style="left:5px;top:428px;width:696px;height:11px;background:#cbcbcb"></div>
<div class="a" style="left:5px;top:439px;width:696px;height:13.5px;background:#f0eeee"></div>
<div class="a" style="left:244.4px;top:428px;width:1px;height:24.5px;background:#e6e4e4"></div>
<div class="a" style="left:370.4px;top:428px;width:1px;height:24.5px;background:#e6e4e4"></div>
<div class="t" style="left:6.00px;top:430.93px;font-size:8px;line-height:8px;color:#111;font-weight:400;letter-spacing:0px;">Ähnlichkeit</div>
<div class="t" style="left:245.50px;top:430.93px;font-size:8px;line-height:8px;color:#111;font-weight:400;letter-spacing:0px;">Kanal</div>
<div class="t" style="left:371.50px;top:430.93px;font-size:8px;line-height:8px;color:#111;font-weight:400;letter-spacing:0px;">Ähnlicher Kanal</div>
<div class="a" style="left:6.5px;top:447px;width:3px;height:1px;background:#222"></div>
<div class="a" style="left:246.0px;top:447px;width:3px;height:1px;background:#222"></div>
<div class="a" style="left:372.0px;top:447px;width:3px;height:1px;background:#222"></div>
<div class="pan" style="left:706px;top:145px;width:311px;height:141px"></div>
<div class="pan" style="left:706px;top:292px;width:311px;height:89px"></div>
<div class="pan" style="left:706px;top:387px;width:311px;height:89px"></div>
<div class="pan" style="left:706px;top:482px;width:311px;height:89px"></div>
<svg width="1024" height="629"><rect x="740.5" y="147.5" width="270.79999999999995" height="114.5" fill="#fdfdfd"/><polygon points="740.50,262.00 740.50,159.23 742.43,159.42 744.37,159.78 746.30,158.92 748.24,159.26 750.17,160.29 752.11,160.07 754.04,159.79 755.97,159.79 757.91,159.63 759.84,159.84 761.78,159.96 763.71,159.32 765.65,160.11 767.58,159.91 769.51,159.90 771.45,159.45 773.38,159.52 775.32,160.13 777.25,159.09 779.19,160.25 781.12,159.78 783.05,159.61 784.99,159.39 786.92,159.72 788.86,159.85 790.79,160.10 792.73,159.84 794.66,160.10 796.59,160.17 798.53,159.90 800.46,160.06 802.40,159.30 804.33,160.10 806.27,159.02 808.20,159.47 810.13,159.31 812.07,160.12 814.00,159.76 815.94,159.91 817.87,160.13 819.81,159.61 821.74,159.33 823.67,159.74 825.61,159.18 827.54,159.75 829.48,158.96 831.41,159.34 833.35,160.16 835.28,159.54 837.21,159.80 839.15,159.68 841.08,159.63 843.02,157.02 844.95,158.68 846.89,160.27 848.82,159.67 850.75,159.48 852.69,158.93 854.62,159.79 856.56,159.78 858.49,159.85 860.43,159.89 862.36,158.93 864.29,159.85 866.23,159.25 868.16,159.73 870.10,159.41 872.03,159.42 873.97,159.32 875.90,159.98 877.83,159.70 879.77,159.33 881.70,160.03 883.64,159.16 885.57,159.88 887.51,159.35 889.44,160.07 891.37,160.10 893.31,159.37 895.24,160.14 897.18,159.22 899.11,159.64 901.05,160.03 902.98,159.16 904.91,160.03 906.85,160.03 908.78,159.08 910.72,160.01 912.65,159.38 914.59,159.49 916.52,160.19 918.45,158.91 920.39,160.13 922.32,159.51 924.26,160.20 926.19,159.94 928.13,159.83 930.06,159.30 931.99,159.22 933.93,159.72 935.86,160.03 937.80,160.17 939.73,160.19 941.67,160.16 943.60,158.92 945.53,159.14 947.47,159.83 949.40,159.48 951.34,159.76 953.27,159.25 955.21,159.57 957.14,159.39 959.07,159.65 961.01,159.14 962.94,160.19 964.88,160.05 966.81,158.47 968.75,157.22 970.68,159.28 972.61,159.49 974.55,159.99 976.48,158.98 978.42,159.07 980.35,160.26 982.29,159.02 984.22,159.34 986.15,159.39 988.09,159.72 990.02,159.17 991.96,159.07 993.89,159.90 995.83,159.01 997.76,159.42 999.69,160.00 1001.63,160.02 1003.56,159.50 1005.50,159.59 1007.43,159.49 1009.37,159.55 1011.30,159.65 1011.30,262.00" fill="#d2ebea"/><line x1="750.30" y1="159" x2="750.30" y2="262.0" stroke="#bfdcdc" stroke-width="0.9"/><line x1="750.30" y1="147.5" x2="750.30" y2="159" stroke="#e4e4e4" stroke-width="0.9"/><line x1="761.67" y1="159" x2="761.67" y2="262.0" stroke="#bfdcdc" stroke-width="0.9"/><line x1="761.67" y1="147.5" x2="761.67" y2="159" stroke="#e4e4e4" stroke-width="0.9"/><line x1="773.04" y1="159" x2="773.04" y2="262.0" stroke="#bfdcdc" stroke-width="0.9"/><line x1="773.04" y1="147.5" x2="773.04" y2="159" stroke="#e4e4e4" stroke-width="0.9"/><line x1="784.41" y1="159" x2="784.41" y2="262.0" stroke="#bfdcdc" stroke-width="0.9"/><line x1="784.41" y1="147.5" x2="784.41" y2="159" stroke="#e4e4e4" stroke-width="0.9"/><line x1="795.78" y1="159" x2="795.78" y2="262.0" stroke="#bfdcdc" stroke-width="0.9"/><line x1="795.78" y1="147.5" x2="795.78" y2="159" stroke="#e4e4e4" stroke-width="0.9"/><line x1="807.15" y1="159" x2="807.15" y2="262.0" stroke="#bfdcdc" stroke-width="0.9"/><line x1="807.15" y1="147.5" x2="807.15" y2="159" stroke="#e4e4e4" stroke-width="0.9"/><line x1="818.52" y1="159" x2="818.52" y2="262.0" stroke="#bfdcdc" stroke-width="0.9"/><line x1="818.52" y1="147.5" x2="818.52" y2="159" stroke="#e4e4e4" stroke-width="0.9"/><line x1="829.89" y1="159" x2="829.89" y2="262.0" stroke="#bfdcdc" stroke-width="0.9"/><line x1="829.89" y1="147.5" x2="829.89" y2="159" stroke="#e4e4e4" stroke-width="0.9"/><line x1="841.26" y1="159" x2="841.26" y2="262.0" stroke="#bfdcdc" stroke-width="0.9"/><line x1="841.26" y1="147.5" x2="841.26" y2="159" stroke="#e4e4e4" stroke-width="0.9"/><line x1="852.63" y1="159" x2="852.63" y2="262.0" stroke="#bfdcdc" stroke-width="0.9"/><line x1="852.63" y1="147.5" x2="852.63" y2="159" stroke="#e4e4e4" stroke-width="0.9"/><line x1="864.00" y1="159" x2="864.00" y2="262.0" stroke="#bfdcdc" stroke-width="0.9"/><line x1="864.00" y1="147.5" x2="864.00" y2="159" stroke="#e4e4e4" stroke-width="0.9"/><line x1="875.37" y1="159" x2="875.37" y2="262.0" stroke="#bfdcdc" stroke-width="0.9"/><line x1="875.37" y1="147.5" x2="875.37" y2="159" stroke="#e4e4e4" stroke-width="0.9"/><line x1="886.74" y1="159" x2="886.74" y2="262.0" stroke="#bfdcdc" stroke-width="0.9"/><line x1="886.74" y1="147.5" x2="886.74" y2="159" stroke="#e4e4e4" stroke-width="0.9"/><line x1="898.11" y1="159" x2="898.11" y2="262.0" stroke="#bfdcdc" stroke-width="0.9"/><line x1="898.11" y1="147.5" x2="898.11" y2="159" stroke="#e4e4e4" stroke-width="0.9"/><line x1="909.48" y1="159" x2="909.48" y2="262.0" stroke="#bfdcdc" stroke-width="0.9"/><line x1="909.48" y1="147.5" x2="909.48" y2="159" stroke="#e4e4e4" stroke-width="0.9"/><line x1="920.85" y1="159" x2="920.85" y2="262.0" stroke="#bfdcdc" stroke-width="0.9"/><line x1="920.85" y1="147.5" x2="920.85" y2="159" stroke="#e4e4e4" stroke-width="0.9"/><line x1="932.22" y1="159" x2="932.22" y2="262.0" stroke="#bfdcdc" stroke-width="0.9"/><line x1="932.22" y1="147.5" x2="932.22" y2="159" stroke="#e4e4e4" stroke-width="0.9"/><line x1="943.59" y1="159" x2="943.59" y2="262.0" stroke="#bfdcdc" stroke-width="0.9"/><line x1="943.59" y1="147.5" x2="943.59" y2="159" stroke="#e4e4e4" stroke-width="0.9"/><line x1="954.96" y1="159" x2="954.96" y2="262.0" stroke="#bfdcdc" stroke-width="0.9"/><line x1="954.96" y1="147.5" x2="954.96" y2="159" stroke="#e4e4e4" stroke-width="0.9"/><line x1="966.33" y1="159" x2="966.33" y2="262.0" stroke="#bfdcdc" stroke-width="0.9"/><line x1="966.33" y1="147.5" x2="966.33" y2="159" stroke="#e4e4e4" stroke-width="0.9"/><line x1="977.70" y1="159" x2="977.70" y2="262.0" stroke="#bfdcdc" stroke-width="0.9"/><line x1="977.70" y1="147.5" x2="977.70" y2="159" stroke="#e4e4e4" stroke-width="0.9"/><line x1="989.07" y1="159" x2="989.07" y2="262.0" stroke="#bfdcdc" stroke-width="0.9"/><line x1="989.07" y1="147.5" x2="989.07" y2="159" stroke="#e4e4e4" stroke-width="0.9"/><line x1="1000.44" y1="159" x2="1000.44" y2="262.0" stroke="#bfdcdc" stroke-width="0.9"/><line x1="1000.44" y1="147.5" x2="1000.44" y2="159" stroke="#e4e4e4" stroke-width="0.9"/><line x1="1011.81" y1="159" x2="1011.81" y2="262.0" stroke="#bfdcdc" stroke-width="0.9"/><line x1="1011.81" y1="147.5" x2="1011.81" y2="159" stroke="#e4e4e4" stroke-width="0.9"/><line x1="740.5" y1="156.1" x2="1011.3" y2="156.1" stroke="#bfdcdc" stroke-width="0.9"/><line x1="740.5" y1="190.7" x2="1011.3" y2="190.7" stroke="#bfdcdc" stroke-width="0.9"/><line x1="740.5" y1="225.4" x2="1011.3" y2="225.4" stroke="#bfdcdc" stroke-width="0.9"/><polyline points="740.50,159.23 742.43,159.42 744.37,159.78 746.30,158.92 748.24,159.26 750.17,160.29 752.11,160.07 754.04,159.79 755.97,159.79 757.91,159.63 759.84,159.84 761.78,159.96 763.71,159.32 765.65,160.11 767.58,159.91 769.51,159.90 771.45,159.45 773.38,159.52 775.32,160.13 777.25,159.09 779.19,160.25 781.12,159.78 783.05,159.61 784.99,159.39 786.92,159.72 788.86,159.85 790.79,160.10 792.73,159.84 794.66,160.10 796.59,160.17 798.53,159.90 800.46,160.06 802.40,159.30 804.33,160.10 806.27,159.02 808.20,159.47 810.13,159.31 812.07,160.12 814.00,159.76 815.94,159.91 817.87,160.13 819.81,159.61 821.74,159.33 823.67,159.74 825.61,159.18 827.54,159.75 829.48,158.96 831.41,159.34 833.35,160.16 835.28,159.54 837.21,159.80 839.15,159.68 841.08,159.63 843.02,157.02 844.95,158.68 846.89,160.27 848.82,159.67 850.75,159.48 852.69,158.93 854.62,159.79 856.56,159.78 858.49,159.85 860.43,159.89 862.36,158.93 864.29,159.85 866.23,159.25 868.16,159.73 870.10,159.41 872.03,159.42 873.97,159.32 875.90,159.98 877.83,159.70 879.77,159.33 881.70,160.03 883.64,159.16 885.57,159.88 887.51,159.35 889.44,160.07 891.37,160.10 893.31,159.37 895.24,160.14 897.18,159.22 899.11,159.64 901.05,160.03 902.98,159.16 904.91,160.03 906.85,160.03 908.78,159.08 910.72,160.01 912.65,159.38 914.59,159.49 916.52,160.19 918.45,158.91 920.39,160.13 922.32,159.51 924.26,160.20 926.19,159.94 928.13,159.83 930.06,159.30 931.99,159.22 933.93,159.72 935.86,160.03 937.80,160.17 939.73,160.19 941.67,160.16 943.60,158.92 945.53,159.14 947.47,159.83 949.40,159.48 951.34,159.76 953.27,159.25 955.21,159.57 957.14,159.39 959.07,159.65 961.01,159.14 962.94,160.19 964.88,160.05 966.81,158.47 968.75,157.22 970.68,159.28 972.61,159.49 974.55,159.99 976.48,158.98 978.42,159.07 980.35,160.26 982.29,159.02 984.22,159.34 986.15,159.39 988.09,159.72 990.02,159.17 991.96,159.07 993.89,159.90 995.83,159.01 997.76,159.42 999.69,160.00 1001.63,160.02 1003.56,159.50 1005.50,159.59 1007.43,159.49 1009.37,159.55 1011.30,159.65" fill="none" stroke="#5fc0bd" stroke-width="1.2"/><polyline points="740.50,161.84 742.43,161.90 744.37,161.37 746.30,162.14 748.24,161.53 750.17,161.77 752.11,161.78 754.04,161.45 755.97,162.17 757.91,162.04 759.84,161.36 761.78,161.89 763.71,161.33 765.65,161.77 767.58,162.18 769.51,162.22 771.45,164.64 773.38,163.32 775.32,161.40 777.25,161.52 779.19,161.74 781.12,161.60 783.05,161.69 784.99,161.89 786.92,162.20 788.86,162.23 790.79,162.29 792.73,161.46 794.66,162.26 796.59,161.87 798.53,161.51 800.46,161.87 802.40,161.36 804.33,162.29 806.27,162.10 808.20,161.45 810.13,162.07 812.07,161.34 814.00,161.34 815.94,161.63 817.87,162.28 819.81,162.30 821.74,161.38 823.67,161.33 825.61,161.71 827.54,161.46 829.48,162.17 831.41,162.26 833.35,161.68 835.28,161.82 837.21,161.90 839.15,161.92 841.08,160.64 843.02,157.05 844.95,160.50 846.89,161.82 848.82,161.31 850.75,161.88 852.69,161.92 854.62,161.36 856.56,161.77 858.49,161.65 860.43,162.04 862.36,161.36 864.29,162.26 866.23,161.76 868.16,161.62 870.10,161.61 872.03,161.90 873.97,161.68 875.90,161.33 877.83,162.04 879.77,161.52 881.70,161.54 883.64,161.74 885.57,161.40 887.51,161.63 889.44,161.74 891.37,161.47 893.31,161.95 895.24,161.75 897.18,161.42 899.11,161.49 901.05,162.14 902.98,161.58 904.91,161.94 906.85,161.65 908.78,161.59 910.72,161.57 912.65,161.72 914.59,161.71 916.52,161.46 918.45,162.24 920.39,162.29 922.32,162.25 924.26,161.52 926.19,162.14 928.13,161.82 930.06,161.64 931.99,161.37 933.93,161.59 935.86,161.35 937.80,161.99 939.73,162.20 941.67,161.88 943.60,162.05 945.53,161.60 947.47,161.82 949.40,162.24 951.34,161.64 953.27,162.16 955.21,162.08 957.14,161.50 959.07,162.12 961.01,162.09 962.94,162.11 964.88,161.31 966.81,160.85 968.75,159.82 970.68,161.83 972.61,161.77 974.55,161.30 976.48,161.43 978.42,161.37 980.35,162.15 982.29,161.80 984.22,161.61 986.15,161.95 988.09,161.66 990.02,161.63 991.96,161.86 993.89,161.68 995.83,161.48 997.76,161.90 999.69,161.68 1001.63,161.92 1003.56,161.67 1005.50,162.00 1007.43,161.99 1009.37,161.55 1011.30,162.00" fill="none" stroke="#2b4a73" stroke-width="1.1"/><line x1="740.5" y1="257.7" x2="1011.3" y2="257.7" stroke="#ee6fae" stroke-width="1.1"/><line x1="740.5" y1="259.8" x2="1011.3" y2="259.8" stroke="#5fc0bd" stroke-width="1"/><circle cx="772" cy="257.7" r="1.8" fill="#ee6fae"/><circle cx="972.4" cy="256.5" r="1.8" fill="#ee6fae"/><path d="M770 164.5 h4 l-2 3 z" fill="#13295a"/><path d="M841 157 h4 l-2 -3 z" fill="#13295a"/><text x="746.10" y="162.00" font-family="Liberation Sans" font-size="14.80" fill="#c2c2c2" textLength="124.00" lengthAdjust="spacingAndGlyphs">Livegraph, 2 Stunden</text><rect x="814.70" y="148.00" width="54.30" height="7.4" fill="#fff" opacity="0.85"/><text x="815.70" y="153.85" font-family="Liberation Sans" font-size="6.01" fill="#333" textLength="52.30" lengthAdjust="spacingAndGlyphs">Max: 1.517 kbit/Sek.</text><rect x="745.10" y="166.90" width="51.60" height="7.4" fill="#fff" opacity="0.85"/><text x="746.10" y="172.75" font-family="Liberation Sans" font-size="6.01" fill="#333" textLength="49.60" lengthAdjust="spacingAndGlyphs">Min: 1.372 kbit/Sek.</text><rect x="740.5" y="147.5" width="270.79999999999995" height="114.5" fill="none" stroke="#2a2a2a" stroke-width="1.4"/><text x="720.30" y="158.75" font-family="Liberation Sans" font-size="6.84" fill="#333" textLength="16.10" lengthAdjust="spacingAndGlyphs">1.500</text><line x1="737" y1="156.3" x2="740" y2="156.3" stroke="#666" stroke-width="0.8"/><text x="720.30" y="193.25" font-family="Liberation Sans" font-size="6.84" fill="#333" textLength="16.10" lengthAdjust="spacingAndGlyphs">1.000</text><line x1="737" y1="190.8" x2="740" y2="190.8" stroke="#666" stroke-width="0.8"/><text x="725.20" y="227.95" font-family="Liberation Sans" font-size="6.84" fill="#333" textLength="11.20" lengthAdjust="spacingAndGlyphs">500</text><line x1="737" y1="225.5" x2="740" y2="225.5" stroke="#666" stroke-width="0.8"/><text x="732.20" y="262.65" font-family="Liberation Sans" font-size="6.84" fill="#333" textLength="4.20" lengthAdjust="spacingAndGlyphs">0</text><line x1="737" y1="260.2" x2="740" y2="260.2" stroke="#666" stroke-width="0.8"/><text transform="translate(716.30,217.50) rotate(-90)" font-family="Liberation Sans" font-size="6.98" fill="#444" textLength="24.20" lengthAdjust="spacingAndGlyphs">kbit/Sek.</text><text transform="translate(752.25,263.60) rotate(-90)" font-family="Liberation Sans" font-size="7.40" fill="#3d3d3d" text-anchor="end" textLength="15.60" lengthAdjust="spacingAndGlyphs">18:20</text><text transform="translate(763.62,263.60) rotate(-90)" font-family="Liberation Sans" font-size="7.40" fill="#3d3d3d" text-anchor="end" textLength="15.60" lengthAdjust="spacingAndGlyphs">18:25</text><text transform="translate(774.99,263.60) rotate(-90)" font-family="Liberation Sans" font-size="7.40" fill="#3d3d3d" text-anchor="end" textLength="15.60" lengthAdjust="spacingAndGlyphs">18:30</text><text transform="translate(786.36,263.60) rotate(-90)" font-family="Liberation Sans" font-size="7.40" fill="#3d3d3d" text-anchor="end" textLength="15.60" lengthAdjust="spacingAndGlyphs">18:35</text><text transform="translate(797.73,263.60) rotate(-90)" font-family="Liberation Sans" font-size="7.40" fill="#3d3d3d" text-anchor="end" textLength="15.60" lengthAdjust="spacingAndGlyphs">18:40</text><text transform="translate(809.10,263.60) rotate(-90)" font-family="Liberation Sans" font-size="7.40" fill="#3d3d3d" text-anchor="end" textLength="15.60" lengthAdjust="spacingAndGlyphs">18:45</text><text transform="translate(820.47,263.60) rotate(-90)" font-family="Liberation Sans" font-size="7.40" fill="#3d3d3d" text-anchor="end" textLength="15.60" lengthAdjust="spacingAndGlyphs">18:50</text><text transform="translate(831.84,263.60) rotate(-90)" font-family="Liberation Sans" font-size="7.40" fill="#3d3d3d" text-anchor="end" textLength="15.60" lengthAdjust="spacingAndGlyphs">18:55</text><text transform="translate(843.21,263.60) rotate(-90)" font-family="Liberation Sans" font-size="7.40" fill="#3d3d3d" text-anchor="end" textLength="15.60" lengthAdjust="spacingAndGlyphs">19:00</text><text transform="translate(854.58,263.60) rotate(-90)" font-family="Liberation Sans" font-size="7.40" fill="#3d3d3d" text-anchor="end" textLength="15.60" lengthAdjust="spacingAndGlyphs">19:05</text><text transform="translate(865.95,263.60) rotate(-90)" font-family="Liberation Sans" font-size="7.40" fill="#3d3d3d" text-anchor="end" textLength="15.60" lengthAdjust="spacingAndGlyphs">19:10</text><text transform="translate(877.32,263.60) rotate(-90)" font-family="Liberation Sans" font-size="7.40" fill="#3d3d3d" text-anchor="end" textLength="15.60" lengthAdjust="spacingAndGlyphs">19:15</text><text transform="translate(888.69,263.60) rotate(-90)" font-family="Liberation Sans" font-size="7.40" fill="#3d3d3d" text-anchor="end" textLength="15.60" lengthAdjust="spacingAndGlyphs">19:20</text><text transform="translate(900.06,263.60) rotate(-90)" font-family="Liberation Sans" font-size="7.40" fill="#3d3d3d" text-anchor="end" textLength="15.60" lengthAdjust="spacingAndGlyphs">19:25</text><text transform="translate(911.43,263.60) rotate(-90)" font-family="Liberation Sans" font-size="7.40" fill="#3d3d3d" text-anchor="end" textLength="15.60" lengthAdjust="spacingAndGlyphs">19:30</text><text transform="translate(922.80,263.60) rotate(-90)" font-family="Liberation Sans" font-size="7.40" fill="#3d3d3d" text-anchor="end" textLength="15.60" lengthAdjust="spacingAndGlyphs">19:35</text><text transform="translate(934.17,263.60) rotate(-90)" font-family="Liberation Sans" font-size="7.40" fill="#3d3d3d" text-anchor="end" textLength="15.60" lengthAdjust="spacingAndGlyphs">19:40</text><text transform="translate(945.54,263.60) rotate(-90)" font-family="Liberation Sans" font-size="7.40" fill="#3d3d3d" text-anchor="end" textLength="15.60" lengthAdjust="spacingAndGlyphs">19:45</text><text transform="translate(956.91,263.60) rotate(-90)" font-family="Liberation Sans" font-size="7.40" fill="#3d3d3d" text-anchor="end" textLength="15.60" lengthAdjust="spacingAndGlyphs">19:50</text><text transform="translate(968.28,263.60) rotate(-90)" font-family="Liberation Sans" font-size="7.40" fill="#3d3d3d" text-anchor="end" textLength="15.60" lengthAdjust="spacingAndGlyphs">19:55</text><text transform="translate(979.65,263.60) rotate(-90)" font-family="Liberation Sans" font-size="7.40" fill="#3d3d3d" text-anchor="end" textLength="15.60" lengthAdjust="spacingAndGlyphs">20:00</text><text transform="translate(991.02,263.60) rotate(-90)" font-family="Liberation Sans" font-size="7.40" fill="#3d3d3d" text-anchor="end" textLength="15.60" lengthAdjust="spacingAndGlyphs">20:05</text><text transform="translate(1002.39,263.60) rotate(-90)" font-family="Liberation Sans" font-size="7.40" fill="#3d3d3d" text-anchor="end" textLength="15.60" lengthAdjust="spacingAndGlyphs">20:10</text><text transform="translate(1013.76,263.60) rotate(-90)" font-family="Liberation Sans" font-size="7.40" fill="#3d3d3d" text-anchor="end" textLength="15.60" lengthAdjust="spacingAndGlyphs">20:15</text><rect x="740.5" y="294.0" width="239.0" height="62.60000000000002" fill="#fdfdfd"/><polygon points="740.50,356.60 740.50,333.87 740.90,333.98 741.30,333.98 741.70,334.11 742.10,334.13 742.50,333.96 742.90,334.12 743.30,334.09 743.70,333.93 744.10,333.99 744.50,333.89 744.90,334.09 745.30,334.05 745.70,334.12 746.10,334.09 746.50,334.05 746.90,334.07 747.30,334.02 747.70,333.88 748.10,334.03 748.50,333.85 748.90,333.89 749.30,334.08 749.70,333.86 750.10,333.88 750.50,333.88 750.90,334.11 751.30,333.90 751.70,333.86 752.10,334.10 752.50,333.89 752.90,334.10 753.30,334.05 753.70,334.10 754.10,334.14 754.50,334.02 754.90,334.09 755.30,333.86 755.70,334.08 756.10,334.00 756.50,334.06 756.90,333.88 757.30,334.07 757.70,334.13 758.10,333.87 758.50,333.95 758.90,334.02 759.30,334.10 759.70,333.92 760.10,333.90 760.50,333.92 760.90,334.03 761.30,334.08 761.70,333.97 762.10,333.96 762.50,333.97 762.90,333.96 763.30,333.98 763.70,333.87 764.10,334.00 764.50,334.14 764.90,333.97 765.30,334.07 765.70,333.90 766.10,334.06 766.50,334.08 766.90,334.05 767.30,334.01 767.70,334.00 768.10,334.04 768.50,334.12 768.90,333.89 769.30,333.88 769.70,334.07 770.10,334.12 770.50,334.01 770.90,333.98 771.30,334.07 771.70,333.91 772.10,333.93 772.50,333.91 772.90,334.03 773.30,333.94 773.70,333.92 774.10,334.06 774.50,334.14 774.90,333.94 775.30,334.06 775.70,333.97 776.10,334.11 776.50,334.03 776.90,333.93 777.30,333.92 777.70,333.86 778.10,333.99 778.50,333.96 778.90,333.90 779.30,333.96 779.70,333.95 780.10,334.08 780.50,333.89 780.90,334.15 781.30,333.99 781.70,334.03 782.10,333.99 782.50,334.10 782.90,334.10 783.30,334.02 783.70,333.99 784.10,334.07 784.50,334.11 784.90,333.97 785.30,334.07 785.70,334.14 786.10,333.99 786.50,333.92 786.90,333.92 787.30,334.07 787.70,334.05 788.10,334.14 788.50,334.11 788.90,333.92 789.30,333.91 789.70,333.93 790.10,333.91 790.50,334.06 790.90,334.11 791.30,334.12 791.70,333.93 792.10,334.11 792.50,333.94 792.90,333.98 793.30,334.07 793.70,333.88 794.10,333.88 794.50,334.10 794.90,333.94 795.30,333.96 795.70,334.02 796.10,334.05 796.50,333.85 796.90,333.95 797.30,333.98 797.70,334.00 798.10,333.91 798.50,334.03 798.90,334.14 799.30,333.97 799.70,334.01 800.10,333.89 800.50,333.93 800.90,334.05 801.30,333.88 801.70,334.12 802.10,334.12 802.50,333.88 802.90,334.13 803.30,333.96 803.70,334.08 804.10,334.08 804.50,333.94 804.90,334.05 805.30,334.05 805.70,334.09 806.10,333.93 806.50,334.08 806.90,334.14 807.30,334.05 807.70,334.01 808.10,333.88 808.50,334.00 808.90,333.96 809.30,334.07 809.70,334.05 810.10,334.02 810.50,333.90 810.90,334.04 811.30,334.04 811.70,333.90 812.10,334.12 812.50,334.05 812.90,333.89 813.30,334.13 813.70,333.89 814.10,333.95 814.50,334.07 814.90,334.03 815.30,334.02 815.70,334.04 816.10,333.99 816.50,333.94 816.90,333.90 817.30,333.87 817.70,334.06 818.10,334.08 818.50,334.01 818.90,334.07 819.30,333.96 819.70,333.93 820.10,333.97 820.50,334.11 820.90,333.86 821.30,334.00 821.70,333.92 822.10,334.08 822.50,333.96 822.90,333.95 823.30,333.97 823.70,334.01 824.10,334.08 824.50,333.96 824.90,334.10 825.30,333.88 825.70,333.93 826.10,333.88 826.50,333.88 826.90,334.08 827.30,334.07 827.70,333.91 828.10,333.91 828.50,333.97 828.90,334.07 829.30,334.09 829.70,334.07 830.10,334.03 830.50,333.89 830.90,333.97 831.30,333.91 831.70,334.01 832.10,334.02 832.50,333.91 832.90,333.93 833.30,334.08 833.70,333.86 834.10,334.09 834.50,334.12 834.90,334.13 835.30,333.96 835.70,334.02 836.10,334.02 836.50,334.04 836.90,334.14 837.30,334.06 837.70,333.94 838.10,334.11 838.50,334.00 838.90,334.03 839.30,334.07 839.70,333.85 840.10,334.08 840.50,334.05 840.90,334.00 841.30,334.01 841.70,333.99 842.10,333.91 842.50,334.01 842.90,333.86 843.30,334.00 843.70,334.04 844.10,333.98 844.50,334.02 844.90,334.14 845.30,334.12 845.70,333.89 846.10,334.09 846.50,334.04 846.90,333.87 847.30,333.96 847.70,333.92 848.10,333.87 848.50,334.01 848.90,334.13 849.30,333.95 849.70,334.11 850.10,334.06 850.50,333.89 850.90,334.11 851.30,334.03 851.70,334.13 852.10,334.06 852.50,334.07 852.90,333.95 853.30,333.63 853.70,332.73 854.10,331.78 854.50,330.71 854.90,331.28 855.30,330.25 855.70,328.57 856.10,326.99 856.50,324.50 856.90,322.04 857.30,323.27 857.70,325.87 858.10,328.43 858.50,330.89 858.90,333.35 859.30,334.04 859.70,333.94 860.10,333.99 860.50,334.08 860.90,333.97 861.30,333.90 861.70,334.12 862.10,334.07 862.50,333.96 862.90,333.96 863.30,334.01 863.70,334.03 864.10,333.92 864.50,333.85 864.90,333.91 865.30,334.08 865.70,333.89 866.10,333.99 866.50,333.91 866.90,333.91 867.30,333.90 867.70,333.97 868.10,333.90 868.50,333.86 868.90,333.88 869.30,333.90 869.70,334.00 870.10,333.87 870.50,333.86 870.90,333.98 871.30,333.97 871.70,334.06 872.10,333.87 872.50,333.97 872.90,333.97 873.30,333.86 873.70,334.14 874.10,333.92 874.50,333.88 874.90,333.99 875.30,333.90 875.70,334.04 876.10,333.95 876.50,333.89 876.90,333.87 877.30,334.07 877.70,333.93 878.10,334.09 878.50,333.99 878.90,334.13 879.30,333.94 879.70,333.92 880.10,333.93 880.50,334.09 880.90,334.04 881.30,333.95 881.70,333.88 882.10,334.05 882.50,334.14 882.90,334.03 883.30,333.85 883.70,333.86 884.10,333.88 884.50,333.90 884.90,333.86 885.30,333.87 885.70,334.05 886.10,334.12 886.50,333.91 886.90,334.14 887.30,333.99 887.70,334.09 888.10,334.13 888.50,334.13 888.90,333.86 889.30,333.94 889.70,334.03 890.10,334.13 890.50,333.88 890.90,333.94 891.30,334.10 891.70,333.88 892.10,333.97 892.50,333.95 892.90,334.05 893.30,334.13 893.70,333.90 894.10,334.07 894.50,334.07 894.90,334.10 895.30,334.02 895.70,334.13 896.10,333.96 896.50,333.97 896.90,333.92 897.30,334.08 897.70,333.99 898.10,333.93 898.50,333.90 898.90,334.07 899.30,334.03 899.70,334.06 900.10,333.97 900.50,334.00 900.90,333.90 901.30,334.06 901.70,333.86 902.10,333.99 902.50,334.08 902.90,334.05 903.30,333.88 903.70,333.92 904.10,334.10 904.50,334.04 904.90,334.11 905.30,334.11 905.70,333.98 906.10,334.12 906.50,334.07 906.90,333.95 907.30,333.96 907.70,333.87 908.10,333.97 908.50,334.14 908.90,333.88 909.30,334.02 909.70,333.88 910.10,333.87 910.50,334.04 910.90,333.92 911.30,333.86 911.70,333.90 912.10,334.04 912.50,334.03 912.90,333.85 913.30,333.92 913.70,334.14 914.10,333.92 914.50,334.02 914.90,333.98 915.30,334.08 915.70,334.03 916.10,334.09 916.50,334.01 916.90,333.91 917.30,333.90 917.70,333.87 918.10,334.10 918.50,333.88 918.90,333.86 919.30,334.14 919.70,333.91 920.10,334.12 920.50,333.88 920.90,333.99 921.30,333.92 921.70,334.10 922.10,334.03 922.50,334.04 922.90,334.08 923.30,334.11 923.70,333.95 924.10,334.03 924.50,333.98 924.90,333.88 925.30,334.10 925.70,334.03 926.10,334.09 926.50,333.91 926.90,334.01 927.30,333.99 927.70,334.07 928.10,333.87 928.50,333.95 928.90,334.00 929.30,333.87 929.70,334.02 930.10,334.07 930.50,333.98 930.90,334.04 931.30,334.03 931.70,333.91 932.10,333.96 932.50,334.15 932.90,333.95 933.30,333.98 933.70,333.88 934.10,333.92 934.50,333.90 934.90,334.13 935.30,334.07 935.70,334.11 936.10,334.15 936.50,334.03 936.90,334.13 937.30,334.01 937.70,333.98 938.10,334.13 938.50,334.12 938.90,334.13 939.30,334.00 939.70,334.08 940.10,333.97 940.50,334.15 940.90,334.13 941.30,333.94 941.70,332.80 942.10,331.24 942.50,329.88 942.90,331.40 943.30,332.20 943.70,333.07 944.10,332.58 944.50,331.86 944.90,332.61 945.30,333.00 945.70,333.58 946.10,333.95 946.50,331.32 946.90,327.66 947.30,323.85 947.70,325.63 948.10,329.36 948.50,333.06 948.90,333.87 949.30,333.90 949.70,334.08 950.10,328.37 950.50,317.07 950.90,305.68 951.30,299.96 951.70,311.19 952.10,322.51 952.50,333.94 952.90,332.53 953.30,329.64 953.70,326.74 954.10,328.06 954.50,330.82 954.90,333.26 955.30,333.01 955.70,332.84 956.10,332.67 956.50,332.81 956.90,333.10 957.30,333.57 957.70,333.63 958.10,333.89 958.50,334.01 958.90,334.01 959.30,333.90 959.70,333.18 960.10,330.47 960.50,327.89 960.90,325.05 961.30,323.83 961.70,326.52 962.10,329.33 962.50,331.80 962.90,333.91 963.30,333.85 963.70,333.98 964.10,333.95 964.50,333.87 964.90,334.01 965.30,333.88 965.70,333.94 966.10,332.80 966.50,330.72 966.90,328.35 967.30,326.05 967.70,325.99 968.10,328.35 968.50,330.66 968.90,332.93 969.30,334.12 969.70,334.09 970.10,333.92 970.50,333.89 970.90,334.08 971.30,334.09 971.70,334.00 972.10,334.10 972.50,334.02 972.90,333.93 973.30,333.90 973.70,333.86 974.10,334.04 974.50,334.12 974.90,334.12 975.30,333.99 975.70,334.05 976.10,334.13 976.50,334.09 976.90,334.03 977.30,333.97 977.70,334.01 978.10,333.90 978.50,333.90 978.90,334.06 979.30,334.15 979.50,356.60" fill="#d2ebea"/><line x1="758.2" y1="294.0" x2="758.2" y2="356.6" stroke="#e4e4e4" stroke-width="0.9"/><line x1="788.7" y1="294.0" x2="788.7" y2="356.6" stroke="#e4e4e4" stroke-width="0.9"/><line x1="818.7" y1="294.0" x2="818.7" y2="356.6" stroke="#e4e4e4" stroke-width="0.9"/><line x1="848.5" y1="294.0" x2="848.5" y2="356.6" stroke="#e4e4e4" stroke-width="0.9"/><line x1="879" y1="294.0" x2="879" y2="356.6" stroke="#e4e4e4" stroke-width="0.9"/><line x1="908.8" y1="294.0" x2="908.8" y2="356.6" stroke="#e4e4e4" stroke-width="0.9"/><line x1="938.9" y1="294.0" x2="938.9" y2="356.6" stroke="#e4e4e4" stroke-width="0.9"/><line x1="969.4" y1="294.0" x2="969.4" y2="356.6" stroke="#e4e4e4" stroke-width="0.9"/><line x1="740.5" y1="310.75" x2="979.5" y2="310.75" stroke="#e4e4e4" stroke-width="0.9"/><line x1="740.5" y1="324.9" x2="979.5" y2="324.9" stroke="#e4e4e4" stroke-width="0.9"/><line x1="740.5" y1="340" x2="979.5" y2="340" stroke="#e4e4e4" stroke-width="0.9"/><text x="745.30" y="309.10" font-family="Liberation Sans" font-size="13.13" fill="#d0d0d0" textLength="40.50" lengthAdjust="spacingAndGlyphs">2 Tage</text><polyline points="740.50,333.87 740.90,333.98 741.30,333.98 741.70,334.11 742.10,334.13 742.50,333.96 742.90,334.12 743.30,334.09 743.70,333.93 744.10,333.99 744.50,333.89 744.90,334.09 745.30,334.05 745.70,334.12 746.10,334.09 746.50,334.05 746.90,334.07 747.30,334.02 747.70,333.88 748.10,334.03 748.50,333.85 748.90,333.89 749.30,334.08 749.70,333.86 750.10,333.88 750.50,333.88 750.90,334.11 751.30,333.90 751.70,333.86 752.10,334.10 752.50,333.89 752.90,334.10 753.30,334.05 753.70,334.10 754.10,334.14 754.50,334.02 754.90,334.09 755.30,333.86 755.70,334.08 756.10,334.00 756.50,334.06 756.90,333.88 757.30,334.07 757.70,334.13 758.10,333.87 758.50,333.95 758.90,334.02 759.30,334.10 759.70,333.92 760.10,333.90 760.50,333.92 760.90,334.03 761.30,334.08 761.70,333.97 762.10,333.96 762.50,333.97 762.90,333.96 763.30,333.98 763.70,333.87 764.10,334.00 764.50,334.14 764.90,333.97 765.30,334.07 765.70,333.90 766.10,334.06 766.50,334.08 766.90,334.05 767.30,334.01 767.70,334.00 768.10,334.04 768.50,334.12 768.90,333.89 769.30,333.88 769.70,334.07 770.10,334.12 770.50,334.01 770.90,333.98 771.30,334.07 771.70,333.91 772.10,333.93 772.50,333.91 772.90,334.03 773.30,333.94 773.70,333.92 774.10,334.06 774.50,334.14 774.90,333.94 775.30,334.06 775.70,333.97 776.10,334.11 776.50,334.03 776.90,333.93 777.30,333.92 777.70,333.86 778.10,333.99 778.50,333.96 778.90,333.90 779.30,333.96 779.70,333.95 780.10,334.08 780.50,333.89 780.90,334.15 781.30,333.99 781.70,334.03 782.10,333.99 782.50,334.10 782.90,334.10 783.30,334.02 783.70,333.99 784.10,334.07 784.50,334.11 784.90,333.97 785.30,334.07 785.70,334.14 786.10,333.99 786.50,333.92 786.90,333.92 787.30,334.07 787.70,334.05 788.10,334.14 788.50,334.11 788.90,333.92 789.30,333.91 789.70,333.93 790.10,333.91 790.50,334.06 790.90,334.11 791.30,334.12 791.70,333.93 792.10,334.11 792.50,333.94 792.90,333.98 793.30,334.07 793.70,333.88 794.10,333.88 794.50,334.10 794.90,333.94 795.30,333.96 795.70,334.02 796.10,334.05 796.50,333.85 796.90,333.95 797.30,333.98 797.70,334.00 798.10,333.91 798.50,334.03 798.90,334.14 799.30,333.97 799.70,334.01 800.10,333.89 800.50,333.93 800.90,334.05 801.30,333.88 801.70,334.12 802.10,334.12 802.50,333.88 802.90,334.13 803.30,333.96 803.70,334.08 804.10,334.08 804.50,333.94 804.90,334.05 805.30,334.05 805.70,334.09 806.10,333.93 806.50,334.08 806.90,334.14 807.30,334.05 807.70,334.01 808.10,333.88 808.50,334.00 808.90,333.96 809.30,334.07 809.70,334.05 810.10,334.02 810.50,333.90 810.90,334.04 811.30,334.04 811.70,333.90 812.10,334.12 812.50,334.05 812.90,333.89 813.30,334.13 813.70,333.89 814.10,333.95 814.50,334.07 814.90,334.03 815.30,334.02 815.70,334.04 816.10,333.99 816.50,333.94 816.90,333.90 817.30,333.87 817.70,334.06 818.10,334.08 818.50,334.01 818.90,334.07 819.30,333.96 819.70,333.93 820.10,333.97 820.50,334.11 820.90,333.86 821.30,334.00 821.70,333.92 822.10,334.08 822.50,333.96 822.90,333.95 823.30,333.97 823.70,334.01 824.10,334.08 824.50,333.96 824.90,334.10 825.30,333.88 825.70,333.93 826.10,333.88 826.50,333.88 826.90,334.08 827.30,334.07 827.70,333.91 828.10,333.91 828.50,333.97 828.90,334.07 829.30,334.09 829.70,334.07 830.10,334.03 830.50,333.89 830.90,333.97 831.30,333.91 831.70,334.01 832.10,334.02 832.50,333.91 832.90,333.93 833.30,334.08 833.70,333.86 834.10,334.09 834.50,334.12 834.90,334.13 835.30,333.96 835.70,334.02 836.10,334.02 836.50,334.04 836.90,334.14 837.30,334.06 837.70,333.94 838.10,334.11 838.50,334.00 838.90,334.03 839.30,334.07 839.70,333.85 840.10,334.08 840.50,334.05 840.90,334.00 841.30,334.01 841.70,333.99 842.10,333.91 842.50,334.01 842.90,333.86 843.30,334.00 843.70,334.04 844.10,333.98 844.50,334.02 844.90,334.14 845.30,334.12 845.70,333.89 846.10,334.09 846.50,334.04 846.90,333.87 847.30,333.96 847.70,333.92 848.10,333.87 848.50,334.01 848.90,334.13 849.30,333.95 849.70,334.11 850.10,334.06 850.50,333.89 850.90,334.11 851.30,334.03 851.70,334.13 852.10,334.06 852.50,334.07 852.90,333.95 853.30,333.63 853.70,332.73 854.10,331.78 854.50,330.71 854.90,331.28 855.30,330.25 855.70,328.57 856.10,326.99 856.50,324.50 856.90,322.04 857.30,323.27 857.70,325.87 858.10,328.43 858.50,330.89 858.90,333.35 859.30,334.04 859.70,333.94 860.10,333.99 860.50,334.08 860.90,333.97 861.30,333.90 861.70,334.12 862.10,334.07 862.50,333.96 862.90,333.96 863.30,334.01 863.70,334.03 864.10,333.92 864.50,333.85 864.90,333.91 865.30,334.08 865.70,333.89 866.10,333.99 866.50,333.91 866.90,333.91 867.30,333.90 867.70,333.97 868.10,333.90 868.50,333.86 868.90,333.88 869.30,333.90 869.70,334.00 870.10,333.87 870.50,333.86 870.90,333.98 871.30,333.97 871.70,334.06 872.10,333.87 872.50,333.97 872.90,333.97 873.30,333.86 873.70,334.14 874.10,333.92 874.50,333.88 874.90,333.99 875.30,333.90 875.70,334.04 876.10,333.95 876.50,333.89 876.90,333.87 877.30,334.07 877.70,333.93 878.10,334.09 878.50,333.99 878.90,334.13 879.30,333.94 879.70,333.92 880.10,333.93 880.50,334.09 880.90,334.04 881.30,333.95 881.70,333.88 882.10,334.05 882.50,334.14 882.90,334.03 883.30,333.85 883.70,333.86 884.10,333.88 884.50,333.90 884.90,333.86 885.30,333.87 885.70,334.05 886.10,334.12 886.50,333.91 886.90,334.14 887.30,333.99 887.70,334.09 888.10,334.13 888.50,334.13 888.90,333.86 889.30,333.94 889.70,334.03 890.10,334.13 890.50,333.88 890.90,333.94 891.30,334.10 891.70,333.88 892.10,333.97 892.50,333.95 892.90,334.05 893.30,334.13 893.70,333.90 894.10,334.07 894.50,334.07 894.90,334.10 895.30,334.02 895.70,334.13 896.10,333.96 896.50,333.97 896.90,333.92 897.30,334.08 897.70,333.99 898.10,333.93 898.50,333.90 898.90,334.07 899.30,334.03 899.70,334.06 900.10,333.97 900.50,334.00 900.90,333.90 901.30,334.06 901.70,333.86 902.10,333.99 902.50,334.08 902.90,334.05 903.30,333.88 903.70,333.92 904.10,334.10 904.50,334.04 904.90,334.11 905.30,334.11 905.70,333.98 906.10,334.12 906.50,334.07 906.90,333.95 907.30,333.96 907.70,333.87 908.10,333.97 908.50,334.14 908.90,333.88 909.30,334.02 909.70,333.88 910.10,333.87 910.50,334.04 910.90,333.92 911.30,333.86 911.70,333.90 912.10,334.04 912.50,334.03 912.90,333.85 913.30,333.92 913.70,334.14 914.10,333.92 914.50,334.02 914.90,333.98 915.30,334.08 915.70,334.03 916.10,334.09 916.50,334.01 916.90,333.91 917.30,333.90 917.70,333.87 918.10,334.10 918.50,333.88 918.90,333.86 919.30,334.14 919.70,333.91 920.10,334.12 920.50,333.88 920.90,333.99 921.30,333.92 921.70,334.10 922.10,334.03 922.50,334.04 922.90,334.08 923.30,334.11 923.70,333.95 924.10,334.03 924.50,333.98 924.90,333.88 925.30,334.10 925.70,334.03 926.10,334.09 926.50,333.91 926.90,334.01 927.30,333.99 927.70,334.07 928.10,333.87 928.50,333.95 928.90,334.00 929.30,333.87 929.70,334.02 930.10,334.07 930.50,333.98 930.90,334.04 931.30,334.03 931.70,333.91 932.10,333.96 932.50,334.15 932.90,333.95 933.30,333.98 933.70,333.88 934.10,333.92 934.50,333.90 934.90,334.13 935.30,334.07 935.70,334.11 936.10,334.15 936.50,334.03 936.90,334.13 937.30,334.01 937.70,333.98 938.10,334.13 938.50,334.12 938.90,334.13 939.30,334.00 939.70,334.08 940.10,333.97 940.50,334.15 940.90,334.13 941.30,333.94 941.70,332.80 942.10,331.24 942.50,329.88 942.90,331.40 943.30,332.20 943.70,333.07 944.10,332.58 944.50,331.86 944.90,332.61 945.30,333.00 945.70,333.58 946.10,333.95 946.50,331.32 946.90,327.66 947.30,323.85 947.70,325.63 948.10,329.36 948.50,333.06 948.90,333.87 949.30,333.90 949.70,334.08 950.10,328.37 950.50,317.07 950.90,305.68 951.30,299.96 951.70,311.19 952.10,322.51 952.50,333.94 952.90,332.53 953.30,329.64 953.70,326.74 954.10,328.06 954.50,330.82 954.90,333.26 955.30,333.01 955.70,332.84 956.10,332.67 956.50,332.81 956.90,333.10 957.30,333.57 957.70,333.63 958.10,333.89 958.50,334.01 958.90,334.01 959.30,333.90 959.70,333.18 960.10,330.47 960.50,327.89 960.90,325.05 961.30,323.83 961.70,326.52 962.10,329.33 962.50,331.80 962.90,333.91 963.30,333.85 963.70,333.98 964.10,333.95 964.50,333.87 964.90,334.01 965.30,333.88 965.70,333.94 966.10,332.80 966.50,330.72 966.90,328.35 967.30,326.05 967.70,325.99 968.10,328.35 968.50,330.66 968.90,332.93 969.30,334.12 969.70,334.09 970.10,333.92 970.50,333.89 970.90,334.08 971.30,334.09 971.70,334.00 972.10,334.10 972.50,334.02 972.90,333.93 973.30,333.90 973.70,333.86 974.10,334.04 974.50,334.12 974.90,334.12 975.30,333.99 975.70,334.05 976.10,334.13 976.50,334.09 976.90,334.03 977.30,333.97 977.70,334.01 978.10,333.90 978.50,333.90 978.90,334.06 979.30,334.15" fill="none" stroke="#13295a" stroke-width="1.0"/><polyline points="950.2,330 951.3,298 952.6,330" fill="#5fc0bd" opacity="0.6"/><circle cx="798.5" cy="334" r="1.6" fill="#13295a"/><circle cx="819" cy="333.5" r="1.4" fill="#5fc0bd"/><line x1="740.5" y1="354.5" x2="979.5" y2="354.5" stroke="#d8262f" stroke-width="1.3"/><circle cx="741.5" cy="354.5" r="1.8" fill="#d8262f"/><circle cx="978.5" cy="354.5" r="1.8" fill="#d8262f"/><circle cx="819" cy="354" r="1.5" fill="#ee6fae"/><circle cx="951" cy="353.3" r="1.7" fill="#ee6fae"/><line x1="951" y1="353.6" x2="958" y2="354" stroke="#ee6fae" stroke-width="1"/><rect x="792.60" y="335.10" width="52.00" height="7.4" fill="#fff" opacity="0.85"/><text x="793.60" y="340.95" font-family="Liberation Sans" font-size="6.01" fill="#333" textLength="50.00" lengthAdjust="spacingAndGlyphs">Min: 1.424 kbit/Sek.</text><rect x="925.60" y="294.80" width="52.10" height="7.4" fill="#fff" opacity="0.85"/><text x="926.60" y="300.65" font-family="Liberation Sans" font-size="6.01" fill="#333" textLength="50.10" lengthAdjust="spacingAndGlyphs">Max: 3.737 kbit/Sek.</text><path d="M979.5 294.0 H740.5 V356.6 H979.5" fill="none" stroke="#2a2a2a" stroke-width="1.4"/><line x1="979.5" y1="294.0" x2="979.5" y2="356.6" stroke="#d8262f" stroke-width="1.4"/><line x1="979.5" y1="297.5" x2="982.5" y2="297.5" stroke="#d8262f" stroke-width="0.9"/><text x="985.40" y="300.05" font-family="Liberation Sans" font-size="7.12" fill="#333" textLength="20.60" lengthAdjust="spacingAndGlyphs">100,00</text><line x1="979.5" y1="325.5" x2="982.5" y2="325.5" stroke="#d8262f" stroke-width="0.9"/><text x="985.40" y="328.05" font-family="Liberation Sans" font-size="7.12" fill="#333" textLength="17.20" lengthAdjust="spacingAndGlyphs">50,00</text><line x1="979.5" y1="354.5" x2="982.5" y2="354.5" stroke="#d8262f" stroke-width="0.9"/><text x="985.40" y="357.05" font-family="Liberation Sans" font-size="7.12" fill="#333" textLength="13.80" lengthAdjust="spacingAndGlyphs">0,00</text><text transform="translate(1013.90,327.75) rotate(-90)" font-family="Liberation Sans" font-size="6.70" fill="#444" textLength="5.50" lengthAdjust="spacingAndGlyphs">%</text><text x="720.00" y="313.35" font-family="Liberation Sans" font-size="6.84" fill="#333" textLength="16.40" lengthAdjust="spacingAndGlyphs">3.000</text><line x1="737" y1="310.9" x2="740" y2="310.9" stroke="#666" stroke-width="0.8"/><text x="720.00" y="327.75" font-family="Liberation Sans" font-size="6.84" fill="#333" textLength="16.40" lengthAdjust="spacingAndGlyphs">2.000</text><line x1="737" y1="325.3" x2="740" y2="325.3" stroke="#666" stroke-width="0.8"/><text x="720.00" y="342.35" font-family="Liberation Sans" font-size="6.84" fill="#333" textLength="16.40" lengthAdjust="spacingAndGlyphs">1.000</text><line x1="737" y1="339.9" x2="740" y2="339.9" stroke="#666" stroke-width="0.8"/><text x="732.20" y="356.85" font-family="Liberation Sans" font-size="6.84" fill="#333" textLength="4.20" lengthAdjust="spacingAndGlyphs">0</text><line x1="737" y1="354.4" x2="740" y2="354.4" stroke="#666" stroke-width="0.8"/><text transform="translate(716.30,338.40) rotate(-90)" font-family="Liberation Sans" font-size="6.98" fill="#444" textLength="24.20" lengthAdjust="spacingAndGlyphs">kbit/Sek.</text><text transform="translate(757.15,358.60) rotate(-90)" font-family="Liberation Sans" font-size="7.40" fill="#3d3d3d" text-anchor="end" textLength="16.60" lengthAdjust="spacingAndGlyphs">20.09</text><text transform="translate(766.25,358.60) rotate(-90)" font-family="Liberation Sans" font-size="7.40" fill="#3d3d3d" text-anchor="end" textLength="16.60" lengthAdjust="spacingAndGlyphs">00:00</text><text transform="translate(787.65,358.60) rotate(-90)" font-family="Liberation Sans" font-size="7.40" fill="#3d3d3d" text-anchor="end" textLength="16.60" lengthAdjust="spacingAndGlyphs">20.09</text><text transform="translate(796.75,358.60) rotate(-90)" font-family="Liberation Sans" font-size="7.40" fill="#3d3d3d" text-anchor="end" textLength="16.60" lengthAdjust="spacingAndGlyphs">06:00</text><text transform="translate(817.65,358.60) rotate(-90)" font-family="Liberation Sans" font-size="7.40" fill="#3d3d3d" text-anchor="end" textLength="16.60" lengthAdjust="spacingAndGlyphs">20.09</text><text transform="translate(826.75,358.60) rotate(-90)" font-family="Liberation Sans" font-size="7.40" fill="#3d3d3d" text-anchor="end" textLength="16.60" lengthAdjust="spacingAndGlyphs">12:00</text><text transform="translate(847.45,358.60) rotate(-90)" font-family="Liberation Sans" font-size="7.40" fill="#3d3d3d" text-anchor="end" textLength="16.60" lengthAdjust="spacingAndGlyphs">20.09</text><text transform="translate(856.55,358.60) rotate(-90)" font-family="Liberation Sans" font-size="7.40" fill="#3d3d3d" text-anchor="end" textLength="16.60" lengthAdjust="spacingAndGlyphs">18:00</text><text transform="translate(877.95,358.60) rotate(-90)" font-family="Liberation Sans" font-size="7.40" fill="#3d3d3d" text-anchor="end" textLength="16.60" lengthAdjust="spacingAndGlyphs">21.09</text><text transform="translate(887.05,358.60) rotate(-90)" font-family="Liberation Sans" font-size="7.40" fill="#3d3d3d" text-anchor="end" textLength="16.60" lengthAdjust="spacingAndGlyphs">00:00</text><text transform="translate(907.75,358.60) rotate(-90)" font-family="Liberation Sans" font-size="7.40" fill="#3d3d3d" text-anchor="end" textLength="16.60" lengthAdjust="spacingAndGlyphs">21.09</text><text transform="translate(916.85,358.60) rotate(-90)" font-family="Liberation Sans" font-size="7.40" fill="#3d3d3d" text-anchor="end" textLength="16.60" lengthAdjust="spacingAndGlyphs">06:00</text><text transform="translate(937.85,358.60) rotate(-90)" font-family="Liberation Sans" font-size="7.40" fill="#3d3d3d" text-anchor="end" textLength="16.60" lengthAdjust="spacingAndGlyphs">21.09</text><text transform="translate(946.95,358.60) rotate(-90)" font-family="Liberation Sans" font-size="7.40" fill="#3d3d3d" text-anchor="end" textLength="16.60" lengthAdjust="spacingAndGlyphs">12:00</text><text transform="translate(968.35,358.60) rotate(-90)" font-family="Liberation Sans" font-size="7.40" fill="#3d3d3d" text-anchor="end" textLength="16.60" lengthAdjust="spacingAndGlyphs">21.09</text><text transform="translate(977.45,358.60) rotate(-90)" font-family="Liberation Sans" font-size="7.40" fill="#3d3d3d" text-anchor="end" textLength="16.60" lengthAdjust="spacingAndGlyphs">18:00</text><rect x="740.5" y="389.3" width="239.0" height="47.599999999999966" fill="#fdfdfd"/><polygon points="820.00,436.90 820.00,396.30 820.50,419.20 820.50,419.20 820.90,419.20 821.30,419.20 821.70,419.20 822.10,419.20 822.50,419.20 822.90,419.20 823.30,419.20 823.70,419.20 824.10,419.20 824.50,419.20 824.90,419.20 825.30,419.20 825.70,419.20 826.10,419.20 826.50,419.20 826.90,419.20 827.30,419.20 827.70,419.20 828.10,419.00 828.50,418.20 828.90,417.40 829.30,417.80 829.70,418.60 830.10,419.20 830.50,419.20 830.90,419.20 831.30,419.20 831.70,419.20 832.10,419.20 832.50,419.20 832.90,419.20 833.30,419.20 833.70,419.20 834.10,419.20 834.50,419.20 834.90,419.20 835.30,419.20 835.70,419.20 836.10,419.20 836.50,419.20 836.90,419.20 837.30,419.20 837.70,417.86 838.10,415.18 838.50,412.50 838.90,415.18 839.30,417.86 839.70,419.20 840.10,419.20 840.50,419.20 840.90,419.20 841.30,419.20 841.70,419.20 842.10,419.20 842.50,419.20 842.90,419.20 843.30,419.20 843.70,419.20 844.10,419.20 844.50,419.20 844.90,419.20 845.30,419.20 845.70,418.36 846.10,416.68 846.50,415.00 846.90,416.68 847.30,418.36 847.70,419.20 848.10,419.20 848.50,419.20 848.90,419.20 849.30,419.20 849.70,419.20 850.10,419.20 850.50,419.20 850.90,419.20 851.30,419.20 851.70,418.06 852.10,415.78 852.50,413.50 852.90,415.78 853.30,418.06 853.70,419.20 854.10,419.20 854.50,419.20 854.90,419.20 855.30,419.20 855.70,419.20 856.10,419.20 856.50,419.20 856.90,419.20 857.30,419.20 857.70,419.20 858.10,419.20 858.50,419.20 858.90,419.20 859.30,419.20 859.70,419.20 860.10,419.20 860.50,419.20 860.90,418.93 861.30,417.87 861.70,416.80 862.10,416.27 862.50,417.33 862.90,418.40 863.30,419.20 863.70,419.20 864.10,419.20 864.50,419.20 864.90,419.20 865.30,419.20 865.70,419.20 866.10,419.20 866.50,419.20 866.90,419.20 867.30,419.20 867.70,419.20 868.10,419.20 868.50,419.20 868.90,419.20 869.30,419.20 869.70,419.20 870.10,418.40 870.50,417.33 870.90,416.27 871.30,416.80 871.70,417.87 872.10,418.93 872.50,419.20 872.90,419.20 873.30,419.20 873.70,419.20 874.10,419.20 874.50,419.20 874.90,419.20 875.30,419.20 875.70,419.20 876.10,419.20 876.50,419.20 876.90,419.20 877.30,419.20 877.70,419.20 878.10,419.20 878.50,419.20 878.90,419.20 879.30,419.20 879.70,419.20 880.10,419.20 880.50,419.20 880.90,419.20 881.30,419.20 881.70,419.20 882.10,419.20 882.50,419.20 882.90,419.20 883.30,419.20 883.70,419.20 884.10,419.20 884.50,419.20 884.90,419.20 885.30,418.50 885.70,418.50 886.10,418.50 886.50,418.50 886.90,418.50 887.30,418.50 887.70,418.50 888.10,418.50 888.50,418.50 888.90,418.50 889.30,418.50 889.70,418.50 890.10,418.50 890.50,418.50 890.90,418.50 891.30,418.50 891.70,418.50 892.10,418.50 892.50,418.50 892.90,418.50 893.30,418.50 893.70,418.50 894.10,418.50 894.50,418.50 894.90,418.50 895.30,418.50 895.70,418.50 896.10,418.50 896.50,418.50 896.90,418.50 897.30,418.50 897.70,418.50 898.10,418.50 898.50,418.50 898.90,418.50 899.30,418.50 899.70,418.50 900.10,418.50 900.50,418.50 900.90,418.50 901.30,418.50 901.70,418.50 902.10,418.50 902.50,418.50 902.90,418.50 903.30,418.50 903.70,418.50 904.10,418.50 904.50,418.50 904.90,418.50 905.30,418.50 905.70,418.50 906.10,418.50 906.50,418.50 906.90,418.50 907.30,418.50 907.70,418.50 908.10,418.50 908.50,418.50 908.90,418.50 909.30,418.50 909.70,418.50 910.10,418.50 910.50,418.50 910.90,418.50 911.30,418.50 911.70,418.50 912.10,418.50 912.50,418.50 912.90,418.50 913.30,418.50 913.70,418.50 914.10,418.50 914.50,418.50 914.90,418.50 915.30,418.50 915.70,418.50 916.10,418.50 916.50,418.50 916.90,418.50 917.30,418.50 917.70,418.50 918.10,418.50 918.50,418.50 918.90,418.50 919.30,418.50 919.70,418.50 920.10,418.50 920.50,418.50 920.90,418.50 921.30,418.50 921.70,418.50 922.10,418.50 922.50,418.50 922.90,418.50 923.30,418.50 923.70,418.50 924.10,418.50 924.50,418.50 924.90,418.50 925.30,418.50 925.70,418.50 926.10,418.50 926.50,418.50 926.90,418.50 927.30,418.50 927.70,418.50 928.10,418.50 928.50,418.50 928.90,418.50 929.30,418.50 929.70,418.50 930.10,418.50 930.50,418.50 930.90,418.50 931.30,418.50 931.70,418.50 932.10,418.50 932.50,418.50 932.90,418.50 933.30,418.50 933.70,418.50 934.10,418.50 934.50,418.50 934.90,418.50 935.30,418.50 935.70,418.50 936.10,418.50 936.50,418.50 936.90,418.50 937.30,418.50 937.70,418.50 938.10,418.50 938.50,418.50 938.90,418.50 939.30,418.50 939.70,418.50 940.10,418.50 940.50,418.50 940.90,418.50 941.30,418.50 941.70,418.50 942.10,418.50 942.50,418.50 942.90,418.50 943.30,418.50 943.70,418.50 944.10,418.50 944.50,418.50 944.90,418.50 945.30,418.50 945.70,418.50 946.10,418.50 946.50,418.50 946.90,418.50 947.30,418.50 947.70,418.50 948.10,418.50 948.50,418.50 948.90,418.50 949.30,418.50 949.70,418.50 950.10,418.50 950.50,418.50 950.90,418.50 951.30,418.50 951.70,418.50 952.10,418.50 952.50,418.50 952.90,418.50 953.30,418.50 953.70,418.50 954.10,418.50 954.50,418.50 954.90,418.50 955.30,418.50 955.70,418.50 956.10,418.50 956.50,418.50 956.90,418.50 957.30,418.50 957.70,418.50 958.10,418.50 958.50,418.50 958.90,418.50 959.30,418.50 959.70,418.50 960.10,418.50 960.50,418.50 960.90,418.50 961.30,418.50 961.70,418.50 962.10,418.50 962.50,418.50 962.90,418.50 963.30,418.50 963.70,418.50 964.10,418.50 964.50,418.50 964.90,418.50 965.30,418.50 965.70,418.50 966.10,418.50 966.50,418.50 966.90,418.50 967.30,418.50 967.70,418.50 968.10,418.50 968.50,418.50 968.90,418.50 969.30,418.50 969.70,418.50 970.10,418.50 970.50,418.50 970.90,418.50 971.30,418.50 971.70,418.50 972.10,418.50 972.50,418.50 972.90,418.50 973.30,418.50 973.70,418.50 974.10,418.50 974.50,418.50 974.90,418.50 975.30,418.50 975.70,418.50 976.10,418.50 976.50,418.50 976.90,418.50 977.30,418.50 977.70,418.50 978.10,418.50 978.50,418.50 978.90,418.50 979.30,418.50 979.50,436.90" fill="#d2ebea"/><rect x="850.8" y="413" width="2.4" height="23.899999999999977" fill="#5fc0bd" opacity="0.75"/><rect x="819.3" y="396.3" width="1.6" height="40.599999999999966" fill="#5fc0bd" opacity="0.75"/><line x1="750.10" y1="389.3" x2="750.10" y2="436.9" stroke="#e4e4e4" stroke-width="0.9"/><line x1="766.02" y1="389.3" x2="766.02" y2="436.9" stroke="#e4e4e4" stroke-width="0.9"/><line x1="781.94" y1="389.3" x2="781.94" y2="436.9" stroke="#e4e4e4" stroke-width="0.9"/><line x1="797.86" y1="389.3" x2="797.86" y2="436.9" stroke="#e4e4e4" stroke-width="0.9"/><line x1="813.78" y1="389.3" x2="813.78" y2="436.9" stroke="#e4e4e4" stroke-width="0.9"/><line x1="829.70" y1="389.3" x2="829.70" y2="436.9" stroke="#e4e4e4" stroke-width="0.9"/><line x1="845.62" y1="389.3" x2="845.62" y2="436.9" stroke="#e4e4e4" stroke-width="0.9"/><line x1="861.54" y1="389.3" x2="861.54" y2="436.9" stroke="#e4e4e4" stroke-width="0.9"/><line x1="877.46" y1="389.3" x2="877.46" y2="436.9" stroke="#e4e4e4" stroke-width="0.9"/><line x1="893.38" y1="389.3" x2="893.38" y2="436.9" stroke="#e4e4e4" stroke-width="0.9"/><line x1="909.30" y1="389.3" x2="909.30" y2="436.9" stroke="#e4e4e4" stroke-width="0.9"/><line x1="925.22" y1="389.3" x2="925.22" y2="436.9" stroke="#e4e4e4" stroke-width="0.9"/><line x1="941.14" y1="389.3" x2="941.14" y2="436.9" stroke="#e4e4e4" stroke-width="0.9"/><line x1="957.06" y1="389.3" x2="957.06" y2="436.9" stroke="#e4e4e4" stroke-width="0.9"/><line x1="972.98" y1="389.3" x2="972.98" y2="436.9" stroke="#e4e4e4" stroke-width="0.9"/><line x1="740.5" y1="412.6" x2="979.5" y2="412.6" stroke="#e4e4e4" stroke-width="0.9"/><text x="745.30" y="404.40" font-family="Liberation Sans" font-size="13.13" fill="#d0d0d0" textLength="47.80" lengthAdjust="spacingAndGlyphs">30 Tage</text><polyline points="820.50,419.20 820.90,419.20 821.30,419.20 821.70,419.20 822.10,419.20 822.50,419.20 822.90,419.20 823.30,419.20 823.70,419.20 824.10,419.20 824.50,419.20 824.90,419.20 825.30,419.20 825.70,419.20 826.10,419.20 826.50,419.20 826.90,419.20 827.30,419.20 827.70,419.20 828.10,419.00 828.50,418.20 828.90,417.40 829.30,417.80 829.70,418.60 830.10,419.20 830.50,419.20 830.90,419.20 831.30,419.20 831.70,419.20 832.10,419.20 832.50,419.20 832.90,419.20 833.30,419.20 833.70,419.20 834.10,419.20 834.50,419.20 834.90,419.20 835.30,419.20 835.70,419.20 836.10,419.20 836.50,419.20 836.90,419.20 837.30,419.20 837.70,417.86 838.10,415.18 838.50,412.50 838.90,415.18 839.30,417.86 839.70,419.20 840.10,419.20 840.50,419.20 840.90,419.20 841.30,419.20 841.70,419.20 842.10,419.20 842.50,419.20 842.90,419.20 843.30,419.20 843.70,419.20 844.10,419.20 844.50,419.20 844.90,419.20 845.30,419.20 845.70,418.36 846.10,416.68 846.50,415.00 846.90,416.68 847.30,418.36 847.70,419.20 848.10,419.20 848.50,419.20 848.90,419.20 849.30,419.20 849.70,419.20 850.10,419.20 850.50,419.20 850.90,419.20 851.30,419.20 851.70,418.06 852.10,415.78 852.50,413.50 852.90,415.78 853.30,418.06 853.70,419.20 854.10,419.20 854.50,419.20 854.90,419.20 855.30,419.20 855.70,419.20 856.10,419.20 856.50,419.20 856.90,419.20 857.30,419.20 857.70,419.20 858.10,419.20 858.50,419.20 858.90,419.20 859.30,419.20 859.70,419.20 860.10,419.20 860.50,419.20 860.90,418.93 861.30,417.87 861.70,416.80 862.10,416.27 862.50,417.33 862.90,418.40 863.30,419.20 863.70,419.20 864.10,419.20 864.50,419.20 864.90,419.20 865.30,419.20 865.70,419.20 866.10,419.20 866.50,419.20 866.90,419.20 867.30,419.20 867.70,419.20 868.10,419.20 868.50,419.20 868.90,419.20 869.30,419.20 869.70,419.20 870.10,418.40 870.50,417.33 870.90,416.27 871.30,416.80 871.70,417.87 872.10,418.93 872.50,419.20 872.90,419.20 873.30,419.20 873.70,419.20 874.10,419.20 874.50,419.20 874.90,419.20 875.30,419.20 875.70,419.20 876.10,419.20 876.50,419.20 876.90,419.20 877.30,419.20 877.70,419.20 878.10,419.20 878.50,419.20 878.90,419.20 879.30,419.20 879.70,419.20 880.10,419.20 880.50,419.20 880.90,419.20 881.30,419.20 881.70,419.20 882.10,419.20 882.50,419.20 882.90,419.20 883.30,419.20 883.70,419.20 884.10,419.20 884.50,419.20 884.90,419.20 885.30,418.50 885.70,418.50 886.10,418.50 886.50,418.50 886.90,418.50 887.30,418.50 887.70,418.50 888.10,418.50 888.50,418.50 888.90,418.50 889.30,418.50 889.70,418.50 890.10,418.50 890.50,418.50 890.90,418.50 891.30,418.50 891.70,418.50 892.10,418.50 892.50,418.50 892.90,418.50 893.30,418.50 893.70,418.50 894.10,418.50 894.50,418.50 894.90,418.50 895.30,418.50 895.70,418.50 896.10,418.50 896.50,418.50 896.90,418.50 897.30,418.50 897.70,418.50 898.10,418.50 898.50,418.50 898.90,418.50 899.30,418.50 899.70,418.50 900.10,418.50 900.50,418.50 900.90,418.50 901.30,418.50 901.70,418.50 902.10,418.50 902.50,418.50 902.90,418.50 903.30,418.50 903.70,418.50 904.10,418.50 904.50,418.50 904.90,418.50 905.30,418.50 905.70,418.50 906.10,418.50 906.50,418.50 906.90,418.50 907.30,418.50 907.70,418.50 908.10,418.50 908.50,418.50 908.90,418.50 909.30,418.50 909.70,418.50 910.10,418.50 910.50,418.50 910.90,418.50 911.30,418.50 911.70,418.50 912.10,418.50 912.50,418.50 912.90,418.50 913.30,418.50 913.70,418.50 914.10,418.50 914.50,418.50 914.90,418.50 915.30,418.50 915.70,418.50 916.10,418.50 916.50,418.50 916.90,418.50 917.30,418.50 917.70,418.50 918.10,418.50 918.50,418.50 918.90,418.50 919.30,418.50 919.70,418.50 920.10,418.50 920.50,418.50 920.90,418.50 921.30,418.50 921.70,418.50 922.10,418.50 922.50,418.50 922.90,418.50 923.30,418.50 923.70,418.50 924.10,418.50 924.50,418.50 924.90,418.50 925.30,418.50 925.70,418.50 926.10,418.50 926.50,418.50 926.90,418.50 927.30,418.50 927.70,418.50 928.10,418.50 928.50,418.50 928.90,418.50 929.30,418.50 929.70,418.50 930.10,418.50 930.50,418.50 930.90,418.50 931.30,418.50 931.70,418.50 932.10,418.50 932.50,418.50 932.90,418.50 933.30,418.50 933.70,418.50 934.10,418.50 934.50,418.50 934.90,418.50 935.30,418.50 935.70,418.50 936.10,418.50 936.50,418.50 936.90,418.50 937.30,418.50 937.70,418.50 938.10,418.50 938.50,418.50 938.90,418.50 939.30,418.50 939.70,418.50 940.10,418.50 940.50,418.50 940.90,418.50 941.30,418.50 941.70,418.50 942.10,418.50 942.50,418.50 942.90,418.50 943.30,418.50 943.70,418.50 944.10,418.50 944.50,418.50 944.90,418.50 945.30,418.50 945.70,418.50 946.10,418.50 946.50,418.50 946.90,418.50 947.30,418.50 947.70,418.50 948.10,418.50 948.50,418.50 948.90,418.50 949.30,418.50 949.70,418.50 950.10,418.50 950.50,418.50 950.90,418.50 951.30,418.50 951.70,418.50 952.10,418.50 952.50,418.50 952.90,418.50 953.30,418.50 953.70,418.50 954.10,418.50 954.50,418.50 954.90,418.50 955.30,418.50 955.70,418.50 956.10,418.50 956.50,418.50 956.90,418.50 957.30,418.50 957.70,418.50 958.10,418.50 958.50,418.50 958.90,418.50 959.30,418.50 959.70,418.50 960.10,418.50 960.50,418.50 960.90,418.50 961.30,418.50 961.70,418.50 962.10,418.50 962.50,418.50 962.90,418.50 963.30,418.50 963.70,418.50 964.10,418.50 964.50,418.50 964.90,418.50 965.30,418.50 965.70,418.50 966.10,418.50 966.50,418.50 966.90,418.50 967.30,418.50 967.70,418.50 968.10,418.50 968.50,418.50 968.90,418.50 969.30,418.50 969.70,418.50 970.10,418.50 970.50,418.50 970.90,418.50 971.30,418.50 971.70,418.50 972.10,418.50 972.50,418.50 972.90,418.50 973.30,418.50 973.70,418.50 974.10,418.50 974.50,418.50 974.90,418.50 975.30,418.50 975.70,418.50 976.10,418.50 976.50,418.50 976.90,418.50 977.30,418.50 977.70,418.50 978.10,418.50 978.50,418.50 978.90,418.50 979.30,418.50" fill="none" stroke="#5fc0bd" stroke-width="1.0"/><polyline points="820.30,403.00 822.50,425.80 823.00,425.00 823.40,425.00 823.80,425.00 824.20,425.00 824.60,425.00 825.00,425.00 825.40,425.00 825.80,425.00 826.20,425.00 826.60,425.00 827.00,425.00 827.40,425.00 827.80,425.00 828.20,425.00 828.60,423.89 829.00,421.67 829.40,420.56 829.80,422.78 830.20,425.00 830.60,425.00 831.00,425.00 831.40,425.00 831.80,425.00 832.20,425.00 832.60,425.00 833.00,425.00 833.40,425.00 833.80,425.00 834.20,425.00 834.60,425.00 835.00,425.00 835.40,425.00 835.80,425.00 836.20,425.00 836.60,425.00 837.00,425.00 837.40,425.00 837.80,425.00 838.20,425.00 838.60,425.00 839.00,425.00 839.40,425.00 839.80,425.00 840.20,425.00 840.60,425.00 841.00,425.00 841.40,425.00 841.80,425.00 842.20,425.00 842.60,425.00 843.00,425.00 843.40,425.00 843.80,425.00 844.20,425.00 844.60,425.00 845.00,425.00 845.40,425.00 845.80,425.00 846.20,423.95 846.60,422.55 847.00,421.85 847.40,423.25 847.80,424.65 848.20,425.00 848.60,425.00 849.00,425.00 849.40,425.00 849.80,425.00 850.20,425.00 850.60,425.00 851.00,425.00 851.40,425.00 851.80,425.00 852.20,425.00 852.60,425.00 853.00,425.00 853.40,423.60 853.80,422.20 854.20,422.20 854.60,423.60 855.00,425.00 855.40,425.00 855.80,425.00 856.20,425.00 856.60,425.00 857.00,425.00 857.40,425.00 857.80,425.00 858.20,425.00 858.60,425.00 859.00,425.00 859.40,425.00 859.80,425.00 860.20,425.00 860.60,425.00 861.00,424.30 861.40,422.90 861.80,421.50 862.20,422.90 862.60,424.30 863.00,425.00 863.40,425.00 863.80,425.00 864.20,425.00 864.60,425.00 865.00,425.00 865.40,425.00 865.80,425.00 866.20,425.00 866.60,425.00 867.00,425.00 867.40,425.00 867.80,425.00 868.20,425.00 868.60,425.00 869.00,425.00 869.40,425.00 869.80,424.50 870.20,423.50 870.60,422.50 871.00,423.50 871.40,424.50 871.80,425.00 872.20,425.00 872.60,425.00 873.00,425.00 873.40,425.00 873.80,425.00 874.20,425.00 874.60,425.00 875.00,425.00 875.40,425.00 875.80,425.00 876.20,423.69 876.60,421.08 877.00,418.47 877.40,415.85 877.80,415.50 878.20,415.50 878.60,415.50 879.00,415.50 879.40,415.50 879.80,415.50 880.20,415.50 880.60,415.50 881.00,415.50 881.40,415.50 881.80,415.50 882.20,415.50 882.60,425.00 883.00,425.00 883.40,416.00 883.80,416.00 884.20,418.50 884.60,418.50 885.00,418.50 885.40,418.50 885.80,418.50 886.20,418.50 886.60,418.50 887.00,418.08 887.40,417.25 887.80,416.42 888.20,416.42 888.60,417.25 889.00,418.08 889.40,418.50 889.80,418.50 890.20,418.50 890.60,418.50 891.00,418.50 891.40,418.50 891.80,418.50 892.20,418.50 892.60,418.50 893.00,418.50 893.40,418.50 893.80,418.50 894.20,418.50 894.60,418.50 895.00,418.08 895.40,417.25 895.80,416.42 896.20,416.42 896.60,417.25 897.00,418.08 897.40,418.50 897.80,418.50 898.20,418.50 898.60,418.50 899.00,418.50 899.40,418.50 899.80,418.50 900.20,418.50 900.60,418.50 901.00,418.50 901.40,418.50 901.80,418.50 902.20,418.50 902.60,418.50 903.00,418.50 903.40,418.50 903.80,418.50 904.20,417.50 904.60,416.50 905.00,415.50 905.40,416.50 905.80,417.50 906.20,418.50 906.60,418.50 907.00,418.50 907.40,418.50 907.80,418.50 908.20,418.50 908.60,418.50 909.00,418.50 909.40,418.50 909.80,418.50 910.20,418.50 910.60,418.50 911.00,418.50 911.40,418.50 911.80,418.50 912.20,418.50 912.60,418.50 913.00,418.50 913.40,418.50 913.80,418.50 914.20,418.50 914.60,418.50 915.00,418.50 915.40,418.50 915.80,418.50 916.20,417.33 916.60,416.17 917.00,415.00 917.40,416.17 917.80,417.33 918.20,418.50 918.60,418.50 919.00,418.50 919.40,418.50 919.80,418.50 920.20,418.50 920.60,418.50 921.00,418.50 921.40,418.50 921.80,418.50 922.20,418.50 922.60,418.50 923.00,418.50 923.40,418.50 923.80,418.50 924.20,418.50 924.60,418.50 925.00,418.50 925.40,418.50 925.80,418.50 926.20,418.50 926.60,418.50 927.00,418.50 927.40,418.50 927.80,418.50 928.20,418.50 928.60,418.50 929.00,418.50 929.40,415.12 929.80,411.73 930.20,408.35 930.60,410.04 931.00,413.42 931.40,416.81 931.80,418.50 932.20,418.50 932.60,418.50 933.00,418.50 933.40,418.50 933.80,418.50 934.20,418.50 934.60,418.50 935.00,418.50 935.40,418.50 935.80,418.50 936.20,418.50 936.60,418.50 937.00,418.50 937.40,418.50 937.80,418.50 938.20,418.50 938.60,418.50 939.00,418.50 939.40,418.50 939.80,418.50 940.20,418.50 940.60,418.50 941.00,418.50 941.40,418.50 941.80,418.50 942.20,418.50 942.60,418.50 943.00,418.50 943.40,418.50 943.80,418.50 944.20,418.50 944.60,418.50 945.00,416.73 945.40,409.65 945.80,402.58 946.20,395.50 946.60,402.58 947.00,409.65 947.40,416.73 947.80,418.50 948.20,418.50 948.60,418.50 949.00,418.50 949.40,418.50 949.80,418.50 950.20,418.50 950.60,418.50 951.00,418.50 951.40,418.50 951.80,418.50 952.20,418.50 952.60,418.50 953.00,418.50 953.40,418.50 953.80,412.96 954.20,407.42 954.60,401.88 955.00,404.65 955.40,410.19 955.80,415.73 956.20,418.50 956.60,418.50 957.00,418.50 957.40,418.50 957.80,418.50 958.20,418.50 958.60,418.50 959.00,418.50 959.40,418.50 959.80,418.50 960.20,418.50 960.60,418.50 961.00,418.50 961.40,417.70 961.80,416.90 962.20,416.90 962.60,417.70 963.00,418.50 963.40,418.50 963.80,418.50 964.20,418.50 964.60,418.50 965.00,418.50 965.40,418.50 965.80,418.50 966.20,418.50 966.60,418.50 967.00,418.50 967.40,418.50 967.80,418.50 968.20,418.50 968.60,418.50 969.00,418.50 969.40,418.50 969.80,418.50 970.20,418.50 970.60,418.50 971.00,418.50 971.40,418.50 971.80,418.50 972.20,418.50 972.60,418.50 973.00,418.50 973.40,418.50 973.80,418.50 974.20,418.50 974.60,418.50 975.00,418.50 975.40,418.50 975.80,418.50 976.20,418.50 976.60,418.50 977.00,418.50 977.40,416.96 977.80,413.88 978.20,410.81 978.60,409.27 979.00,412.35 979.40,415.42" fill="none" stroke="#13295a" stroke-width="1.05"/><circle cx="823" cy="425" r="1.6" fill="#13295a"/><line x1="820" y1="427.5" x2="860" y2="427.5" stroke="#ee6fae" stroke-width="1"/><circle cx="830.3" cy="427.5" r="1.6" fill="#ee6fae"/><line x1="740.5" y1="434" x2="979.5" y2="434" stroke="#d8262f" stroke-width="1.3"/><circle cx="741.5" cy="434" r="1.6" fill="#d8262f"/><circle cx="884" cy="434" r="1.2" fill="#d8262f"/><rect x="859.70" y="426.00" width="46.50" height="7.4" fill="#fff" opacity="0.85"/><text x="860.70" y="431.85" font-family="Liberation Sans" font-size="6.01" fill="#333" textLength="44.50" lengthAdjust="spacingAndGlyphs">Min: 866 kbit/Sek.</text><rect x="918.80" y="390.30" width="54.00" height="7.4" fill="#fff" opacity="0.85"/><text x="919.80" y="396.15" font-family="Liberation Sans" font-size="6.01" fill="#333" textLength="52.00" lengthAdjust="spacingAndGlyphs">Max: 3.688 kbit/Sek.</text><path d="M979.5 389.3 H740.5 V436.9 H979.5" fill="none" stroke="#2a2a2a" stroke-width="1.4"/><line x1="979.5" y1="389.3" x2="979.5" y2="436.9" stroke="#d8262f" stroke-width="1.4"/><line x1="979.5" y1="392.5" x2="982.5" y2="392.5" stroke="#d8262f" stroke-width="0.9"/><text x="985.40" y="395.05" font-family="Liberation Sans" font-size="7.12" fill="#333" textLength="20.60" lengthAdjust="spacingAndGlyphs">100,00</text><line x1="979.5" y1="413" x2="982.5" y2="413" stroke="#d8262f" stroke-width="0.9"/><text x="985.40" y="415.55" font-family="Liberation Sans" font-size="7.12" fill="#333" textLength="17.20" lengthAdjust="spacingAndGlyphs">50,00</text><line x1="979.5" y1="434" x2="982.5" y2="434" stroke="#d8262f" stroke-width="0.9"/><text x="985.40" y="436.55" font-family="Liberation Sans" font-size="7.12" fill="#333" textLength="13.80" lengthAdjust="spacingAndGlyphs">0,00</text><text transform="translate(1013.90,415.75) rotate(-90)" font-family="Liberation Sans" font-size="6.70" fill="#444" textLength="5.50" lengthAdjust="spacingAndGlyphs">%</text><text x="720.00" y="414.75" font-family="Liberation Sans" font-size="6.84" fill="#333" textLength="16.40" lengthAdjust="spacingAndGlyphs">2.000</text><line x1="737" y1="412.3" x2="740" y2="412.3" stroke="#666" stroke-width="0.8"/><text x="732.20" y="436.25" font-family="Liberation Sans" font-size="6.84" fill="#333" textLength="4.20" lengthAdjust="spacingAndGlyphs">0</text><line x1="737" y1="433.8" x2="740" y2="433.8" stroke="#666" stroke-width="0.8"/><text transform="translate(716.30,426.10) rotate(-90)" font-family="Liberation Sans" font-size="6.98" fill="#444" textLength="24.20" lengthAdjust="spacingAndGlyphs">kbit/Sek.</text><text transform="translate(752.75,437.80) rotate(-90)" font-family="Liberation Sans" font-size="7.40" fill="#3d3d3d" text-anchor="end" textLength="32.60" lengthAdjust="spacingAndGlyphs">24.08.2016</text><text transform="translate(768.67,437.80) rotate(-90)" font-family="Liberation Sans" font-size="7.40" fill="#3d3d3d" text-anchor="end" textLength="32.60" lengthAdjust="spacingAndGlyphs">26.08.2016</text><text transform="translate(784.59,437.80) rotate(-90)" font-family="Liberation Sans" font-size="7.40" fill="#3d3d3d" text-anchor="end" textLength="32.60" lengthAdjust="spacingAndGlyphs">28.08.2016</text><text transform="translate(800.51,437.80) rotate(-90)" font-family="Liberation Sans" font-size="7.40" fill="#3d3d3d" text-anchor="end" textLength="32.60" lengthAdjust="spacingAndGlyphs">30.08.2016</text><text transform="translate(816.43,437.80) rotate(-90)" font-family="Liberation Sans" font-size="7.40" fill="#3d3d3d" text-anchor="end" textLength="32.60" lengthAdjust="spacingAndGlyphs">01.09.2016</text><text transform="translate(832.35,437.80) rotate(-90)" font-family="Liberation Sans" font-size="7.40" fill="#3d3d3d" text-anchor="end" textLength="32.60" lengthAdjust="spacingAndGlyphs">03.09.2016</text><text transform="translate(848.27,437.80) rotate(-90)" font-family="Liberation Sans" font-size="7.40" fill="#3d3d3d" text-anchor="end" textLength="32.60" lengthAdjust="spacingAndGlyphs">06.09.2016</text><text transform="translate(864.19,437.80) rotate(-90)" font-family="Liberation Sans" font-size="7.40" fill="#3d3d3d" text-anchor="end" textLength="32.60" lengthAdjust="spacingAndGlyphs">07.09.2016</text><text transform="translate(880.11,437.80) rotate(-90)" font-family="Liberation Sans" font-size="7.40" fill="#3d3d3d" text-anchor="end" textLength="32.60" lengthAdjust="spacingAndGlyphs">09.09.2016</text><text transform="translate(896.03,437.80) rotate(-90)" font-family="Liberation Sans" font-size="7.40" fill="#3d3d3d" text-anchor="end" textLength="32.60" lengthAdjust="spacingAndGlyphs">11.09.2016</text><text transform="translate(911.95,437.80) rotate(-90)" font-family="Liberation Sans" font-size="7.40" fill="#3d3d3d" text-anchor="end" textLength="32.60" lengthAdjust="spacingAndGlyphs">13.09.2016</text><text transform="translate(927.87,437.80) rotate(-90)" font-family="Liberation Sans" font-size="7.40" fill="#3d3d3d" text-anchor="end" textLength="32.60" lengthAdjust="spacingAndGlyphs">15.09.2016</text><text transform="translate(943.79,437.80) rotate(-90)" font-family="Liberation Sans" font-size="7.40" fill="#3d3d3d" text-anchor="end" textLength="32.60" lengthAdjust="spacingAndGlyphs">17.09.2016</text><text transform="translate(959.71,437.80) rotate(-90)" font-family="Liberation Sans" font-size="7.40" fill="#3d3d3d" text-anchor="end" textLength="32.60" lengthAdjust="spacingAndGlyphs">19.09.2016</text><text transform="translate(975.63,437.80) rotate(-90)" font-family="Liberation Sans" font-size="7.40" fill="#3d3d3d" text-anchor="end" textLength="32.60" lengthAdjust="spacingAndGlyphs">21.09.2016</text><rect x="740.5" y="484.3" width="239.0" height="46.99999999999994" fill="#fdfdfd"/><polygon points="967,531 967,501 979.5,496 979.5,531" fill="#d2ebea"/><line x1="746.00" y1="484.3" x2="746.00" y2="531.3" stroke="#e4e4e4" stroke-width="0.9"/><line x1="766.30" y1="484.3" x2="766.30" y2="531.3" stroke="#e4e4e4" stroke-width="0.9"/><line x1="786.30" y1="484.3" x2="786.30" y2="531.3" stroke="#e4e4e4" stroke-width="0.9"/><line x1="806.30" y1="484.3" x2="806.30" y2="531.3" stroke="#e4e4e4" stroke-width="0.9"/><line x1="826.60" y1="484.3" x2="826.60" y2="531.3" stroke="#e4e4e4" stroke-width="0.9"/><line x1="846.10" y1="484.3" x2="846.10" y2="531.3" stroke="#e4e4e4" stroke-width="0.9"/><line x1="866.80" y1="484.3" x2="866.80" y2="531.3" stroke="#e4e4e4" stroke-width="0.9"/><line x1="886.90" y1="484.3" x2="886.90" y2="531.3" stroke="#e4e4e4" stroke-width="0.9"/><line x1="907.10" y1="484.3" x2="907.10" y2="531.3" stroke="#e4e4e4" stroke-width="0.9"/><line x1="927.10" y1="484.3" x2="927.10" y2="531.3" stroke="#e4e4e4" stroke-width="0.9"/><line x1="946.90" y1="484.3" x2="946.90" y2="531.3" stroke="#e4e4e4" stroke-width="0.9"/><line x1="967.20" y1="484.3" x2="967.20" y2="531.3" stroke="#e4e4e4" stroke-width="0.9"/><line x1="740.5" y1="491" x2="979.5" y2="491" stroke="#e4e4e4" stroke-width="0.9"/><line x1="740.5" y1="510.5" x2="979.5" y2="510.5" stroke="#e4e4e4" stroke-width="0.9"/><text x="745.30" y="499.70" font-family="Liberation Sans" font-size="13.13" fill="#d0d0d0" textLength="54.00" lengthAdjust="spacingAndGlyphs">365 Tage</text><line x1="967.3" y1="488" x2="967.3" y2="531" stroke="#5fc0bd" stroke-width="1.1"/><polyline points="967.5,500 968.5,515 970,512 971,502 972,504 973,505 974,502 976,502 978.5,499.5 979.5,498" fill="none" stroke="#13295a" stroke-width="1.2"/><circle cx="968.5" cy="515" r="1.5" fill="#13295a"/><circle cx="978.5" cy="499.5" r="1.6" fill="#13295a"/><circle cx="973" cy="505" r="1.1" fill="#13295a"/><polyline points="967,517.7 971.5,518 972.5,529" fill="none" stroke="#ee6fae" stroke-width="1.1"/><circle cx="967.7" cy="517.7" r="1.6" fill="#ee6fae"/><line x1="740.5" y1="528.6" x2="979.5" y2="528.6" stroke="#d8262f" stroke-width="1.2"/><circle cx="741.5" cy="528.6" r="1.6" fill="#d8262f"/><rect x="926.90" y="485.00" width="52.70" height="7.4" fill="#fff" opacity="0.85"/><text x="927.90" y="490.85" font-family="Liberation Sans" font-size="6.01" fill="#333" textLength="50.70" lengthAdjust="spacingAndGlyphs">Max: 2.150 kbit/Sek.</text><rect x="928.80" y="508.00" width="50.80" height="7.4" fill="#fff" opacity="0.85"/><text x="929.80" y="513.85" font-family="Liberation Sans" font-size="6.01" fill="#333" textLength="48.80" lengthAdjust="spacingAndGlyphs">Min: 1.262 kbit/Sek.</text><path d="M979.5 484.3 H740.5 V531.3 H979.5" fill="none" stroke="#2a2a2a" stroke-width="1.4"/><line x1="979.5" y1="484.3" x2="979.5" y2="531.3" stroke="#d8262f" stroke-width="1.4"/><line x1="979.5" y1="487.5" x2="982.5" y2="487.5" stroke="#d8262f" stroke-width="0.9"/><text x="985.40" y="490.05" font-family="Liberation Sans" font-size="7.12" fill="#333" textLength="20.60" lengthAdjust="spacingAndGlyphs">100,00</text><line x1="979.5" y1="508.1" x2="982.5" y2="508.1" stroke="#d8262f" stroke-width="0.9"/><text x="985.40" y="510.65" font-family="Liberation Sans" font-size="7.12" fill="#333" textLength="17.20" lengthAdjust="spacingAndGlyphs">50,00</text><line x1="979.5" y1="528.4" x2="982.5" y2="528.4" stroke="#d8262f" stroke-width="0.9"/><text x="985.40" y="530.95" font-family="Liberation Sans" font-size="7.12" fill="#333" textLength="13.80" lengthAdjust="spacingAndGlyphs">0,00</text><text transform="translate(1013.90,512.75) rotate(-90)" font-family="Liberation Sans" font-size="6.70" fill="#444" textLength="5.50" lengthAdjust="spacingAndGlyphs">%</text><text x="720.00" y="494.15" font-family="Liberation Sans" font-size="6.84" fill="#333" textLength="16.40" lengthAdjust="spacingAndGlyphs">2.000</text><line x1="737" y1="491.7" x2="740" y2="491.7" stroke="#666" stroke-width="0.8"/><text x="720.00" y="512.95" font-family="Liberation Sans" font-size="6.84" fill="#333" textLength="16.40" lengthAdjust="spacingAndGlyphs">1.000</text><line x1="737" y1="510.5" x2="740" y2="510.5" stroke="#666" stroke-width="0.8"/><text x="732.20" y="531.35" font-family="Liberation Sans" font-size="6.84" fill="#333" textLength="4.20" lengthAdjust="spacingAndGlyphs">0</text><line x1="737" y1="528.9" x2="740" y2="528.9" stroke="#666" stroke-width="0.8"/><text transform="translate(716.30,521.10) rotate(-90)" font-family="Liberation Sans" font-size="6.98" fill="#444" textLength="24.20" lengthAdjust="spacingAndGlyphs">kbit/Sek.</text><text transform="translate(748.65,532.30) rotate(-90)" font-family="Liberation Sans" font-size="7.40" fill="#3d3d3d" text-anchor="end" textLength="32.60" lengthAdjust="spacingAndGlyphs">01.10.2015</text><text transform="translate(768.95,532.30) rotate(-90)" font-family="Liberation Sans" font-size="7.40" fill="#3d3d3d" text-anchor="end" textLength="32.60" lengthAdjust="spacingAndGlyphs">31.10.2015</text><text transform="translate(788.95,532.30) rotate(-90)" font-family="Liberation Sans" font-size="7.40" fill="#3d3d3d" text-anchor="end" textLength="32.60" lengthAdjust="spacingAndGlyphs">30.11.2015</text><text transform="translate(808.95,532.30) rotate(-90)" font-family="Liberation Sans" font-size="7.40" fill="#3d3d3d" text-anchor="end" textLength="32.60" lengthAdjust="spacingAndGlyphs">31.12.2015</text><text transform="translate(829.25,532.30) rotate(-90)" font-family="Liberation Sans" font-size="7.40" fill="#3d3d3d" text-anchor="end" textLength="32.60" lengthAdjust="spacingAndGlyphs">31.01.2016</text><text transform="translate(848.75,532.30) rotate(-90)" font-family="Liberation Sans" font-size="7.40" fill="#3d3d3d" text-anchor="end" textLength="32.60" lengthAdjust="spacingAndGlyphs">29.02.2016</text><text transform="translate(869.45,532.30) rotate(-90)" font-family="Liberation Sans" font-size="7.40" fill="#3d3d3d" text-anchor="end" textLength="32.60" lengthAdjust="spacingAndGlyphs">02.04.2016</text><text transform="translate(889.55,532.30) rotate(-90)" font-family="Liberation Sans" font-size="7.40" fill="#3d3d3d" text-anchor="end" textLength="32.60" lengthAdjust="spacingAndGlyphs">02.05.2016</text><text transform="translate(909.75,532.30) rotate(-90)" font-family="Liberation Sans" font-size="7.40" fill="#3d3d3d" text-anchor="end" textLength="32.60" lengthAdjust="spacingAndGlyphs">02.06.2016</text><text transform="translate(929.75,532.30) rotate(-90)" font-family="Liberation Sans" font-size="7.40" fill="#3d3d3d" text-anchor="end" textLength="32.60" lengthAdjust="spacingAndGlyphs">02.07.2016</text><text transform="translate(949.55,532.30) rotate(-90)" font-family="Liberation Sans" font-size="7.40" fill="#3d3d3d" text-anchor="end" textLength="32.60" lengthAdjust="spacingAndGlyphs">02.08.2016</text><text transform="translate(969.85,532.30) rotate(-90)" font-family="Liberation Sans" font-size="7.40" fill="#3d3d3d" text-anchor="end" textLength="32.60" lengthAdjust="spacingAndGlyphs">02.09.2016</text><rect x="707" y="582.2" width="10" height="10" fill="#d8262f"/><text x="720.40" y="591.35" font-family="Liberation Sans" font-size="8.24" fill="#222" textLength="36.50" lengthAdjust="spacingAndGlyphs">Ausfallzeit</text><text x="793.70" y="591.35" font-family="Liberation Sans" font-size="8.24" fill="#555" textLength="12.00" lengthAdjust="spacingAndGlyphs">(%)</text><rect x="809" y="582.2" width="10" height="10" fill="#5fc0bd"/><text x="822.40" y="591.35" font-family="Liberation Sans" font-size="8.24" fill="#222" textLength="27.00" lengthAdjust="spacingAndGlyphs">Summe</text><text x="871.40" y="591.35" font-family="Liberation Sans" font-size="8.24" fill="#555" textLength="35.90" lengthAdjust="spacingAndGlyphs">(kbit/Sek.)</text><rect x="707" y="597" width="10" height="10" fill="#13295a"/><text x="720.40" y="606.15" font-family="Liberation Sans" font-size="8.24" fill="#222" textLength="46.60" lengthAdjust="spacingAndGlyphs">Datenverke...</text><text x="769.80" y="606.15" font-family="Liberation Sans" font-size="8.24" fill="#555" textLength="35.90" lengthAdjust="spacingAndGlyphs">(kbit/Sek.)</text><rect x="809" y="597" width="10" height="10" fill="#ee6fae"/><text x="822.40" y="606.15" font-family="Liberation Sans" font-size="8.24" fill="#222" textLength="46.60" lengthAdjust="spacingAndGlyphs">Datenverke...</text><text x="871.40" y="606.15" font-family="Liberation Sans" font-size="8.24" fill="#555" textLength="35.90" lengthAdjust="spacingAndGlyphs">(kbit/Sek.)</text></svg>
</body></html>
